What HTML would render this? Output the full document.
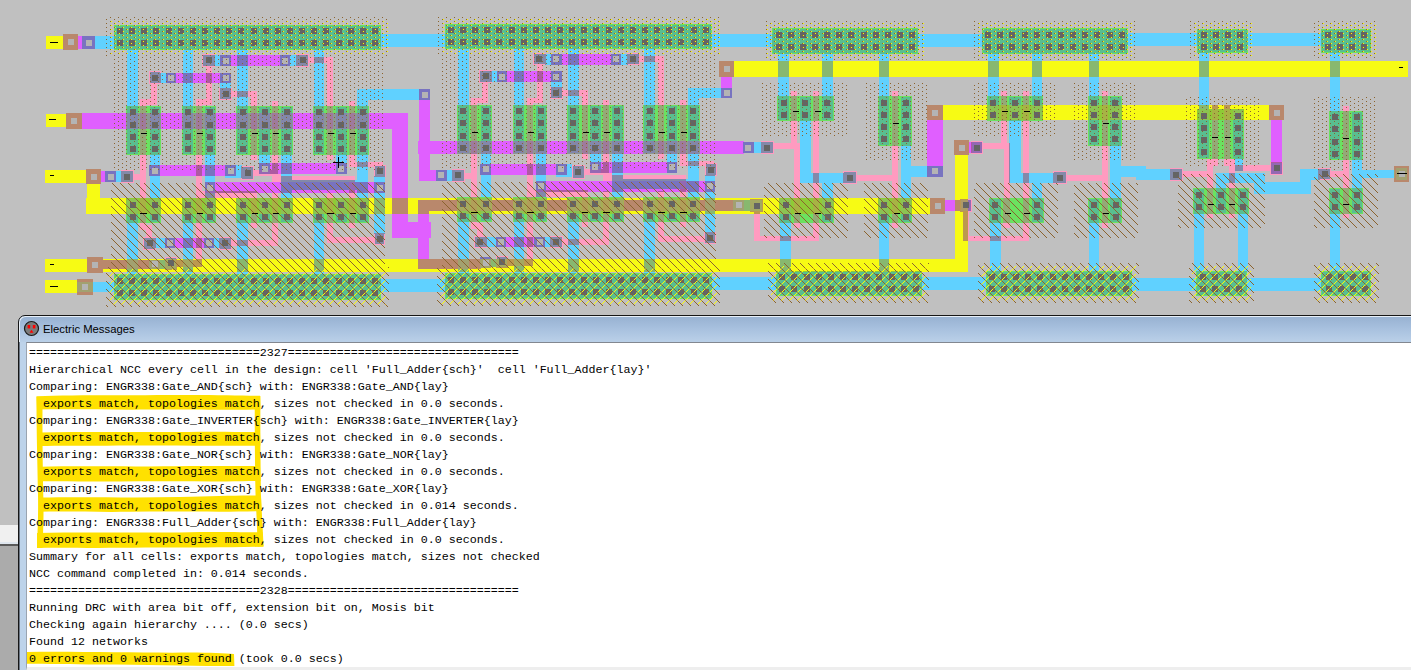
<!DOCTYPE html>
<html><head><meta charset="utf-8"><title>Electric</title>
<style>
html,body{margin:0;padding:0;}
body{width:1411px;height:670px;overflow:hidden;background:#c0c0c0;position:relative;font-family:"Liberation Sans",sans-serif;}
#lay{position:absolute;left:0;top:0;width:1411px;height:316px;overflow:hidden;}
#side1{position:absolute;left:0;top:525px;width:18px;height:17px;background:#f0f0f0;}
#side1b{position:absolute;left:0;top:542px;width:18px;height:2px;background:#dfe6ee;}
#side2{position:absolute;left:0;top:544px;width:18px;height:2px;background:#5a5a5a;}
#side3{position:absolute;left:0;top:546px;width:18px;height:124px;background:#ababab;}
#win{position:absolute;left:18px;top:315px;width:1400px;height:360px;border:1px solid #161616;border-radius:7px 0 0 0;box-sizing:border-box;
 background:#bdd3ea;box-shadow:inset 1px 1px 0 #e8f0f8;}
#tb{position:absolute;left:1px;top:1px;right:0;height:25px;border-radius:6px 0 0 0;background:linear-gradient(#98b2d2,#a7c0de 45%,#bad0e8);}
#ttl{position:absolute;left:43px;top:322px;font-size:11.3px;line-height:15px;color:#000;white-space:pre;}
#ico{position:absolute;left:23px;top:320px;}
#cont{position:absolute;left:26px;top:342px;width:1390px;height:329px;background:#fff;border-bottom:4px solid #eeeeee;border-top:1px solid #828790;border-left:1px solid #9aa4b0;box-sizing:border-box;}
#hl{position:absolute;left:0;top:0;}
#txt{position:absolute;left:29px;top:345px;margin:0;font-family:"Liberation Mono",monospace;font-size:11.667px;line-height:17px;color:#000;white-space:pre;}
</style></head><body>
<div id="lay">
<svg width="1411" height="316" viewBox="0 0 1411 316" shape-rendering="crispEdges" style="position:absolute;left:0;top:0">
<defs><pattern id="dB" width="8" height="4" patternUnits="userSpaceOnUse"><rect x="6" y="1" width="1" height="1" fill="#8b632e"/><rect x="2" y="3" width="1" height="1" fill="#8b632e"/></pattern><pattern id="dY" width="8" height="4" patternUnits="userSpaceOnUse"><rect x="7" y="1" width="1" height="1" fill="#ff0"/><rect x="3" y="3" width="1" height="1" fill="#ff0"/></pattern><pattern id="hB" width="8" height="8" patternUnits="userSpaceOnUse"><rect x="1" y="0" width="1" height="1" fill="#8b632e"/><rect x="2" y="1" width="1" height="1" fill="#8b632e"/><rect x="3" y="2" width="1" height="1" fill="#8b632e"/><rect x="4" y="3" width="1" height="1" fill="#8b632e"/><rect x="5" y="4" width="1" height="1" fill="#8b632e"/><rect x="6" y="5" width="1" height="1" fill="#8b632e"/><rect x="7" y="6" width="1" height="1" fill="#8b632e"/><rect x="0" y="7" width="1" height="1" fill="#8b632e"/></pattern><pattern id="hY" width="8" height="8" patternUnits="userSpaceOnUse"><rect x="1" y="0" width="1" height="1" fill="#c89a10"/><rect x="0" y="1" width="1" height="1" fill="#ff0"/><rect x="7" y="2" width="1" height="1" fill="#ff0"/><rect x="6" y="3" width="1" height="1" fill="#ff0"/><rect x="5" y="4" width="1" height="1" fill="#c89a10"/><rect x="4" y="5" width="1" height="1" fill="#ff0"/><rect x="3" y="6" width="1" height="1" fill="#ff0"/><rect x="2" y="7" width="1" height="1" fill="#ff0"/></pattern></defs>
<path fill="#59be90" d="M446 25h265v2h-265zM115 26h265v2h-265zM773 29h144v3h-144zM983 29h144v3h-144zM1322 30h48v2h-48zM1198 30h49v2h-49zM612 27h6v6h-6zM575 27h6v6h-6zM446 27h2v6h-2zM636 27h6v6h-6zM672 27h6v6h-6zM466 27h6v6h-6zM539 27h6v6h-6zM527 27h6v6h-6zM490 27h6v6h-6zM563 27h6v6h-6zM684 27h7v6h-7zM709 27h2v6h-2zM624 27h6v6h-6zM697 27h6v6h-6zM587 27h6v6h-6zM660 27h6v6h-6zM454 27h6v6h-6zM502 27h7v6h-7zM478 27h6v6h-6zM515 27h6v6h-6zM551 27h6v6h-6zM599 27h7v6h-7zM648 27h6v6h-6zM1125 32h2v1h-2zM1243 32h4v1h-4zM1322 32h3v1h-3zM1198 32h3v1h-3zM281 28h6v6h-6zM135 28h6v6h-6zM208 28h6v6h-6zM329 28h7v6h-7zM159 28h7v6h-7zM115 28h2v6h-2zM172 28h6v6h-6zM342 28h6v6h-6zM232 28h6v6h-6zM305 28h6v6h-6zM269 28h6v6h-6zM366 28h6v6h-6zM378 28h2v6h-2zM123 28h6v6h-6zM196 28h6v6h-6zM244 28h7v6h-7zM293 28h6v6h-6zM257 28h6v6h-6zM147 28h6v6h-6zM220 28h6v6h-6zM354 28h6v6h-6zM317 28h6v6h-6zM184 28h6v6h-6zM773 32h3v2h-3zM983 32h2v2h-2zM915 32h2v2h-2zM446 33h265v1h-265zM115 34h266v2h-266zM1052 32h6v6h-6zM1100 32h7v6h-7zM782 32h6v6h-6zM1003 32h6v6h-6zM842 32h6v6h-6zM879 32h6v6h-6zM818 32h6v6h-6zM1343 32h6v6h-6zM1219 32h6v6h-6zM1367 32h3v6h-3zM1015 32h7v6h-7zM1064 32h6v6h-6zM891 32h6v6h-6zM1076 32h6v6h-6zM1040 32h6v6h-6zM830 32h6v6h-6zM867 32h6v6h-6zM794 32h6v6h-6zM1355 32h6v6h-6zM1231 32h6v6h-6zM1113 32h6v6h-6zM806 32h6v6h-6zM903 32h6v6h-6zM854 32h7v6h-7zM991 32h6v6h-6zM1028 32h6v6h-6zM1088 32h6v6h-6zM1331 32h6v6h-6zM1207 32h6v6h-6zM1197 33h4v5h-4zM1321 33h4v5h-4zM1243 33h5v5h-5zM1125 33h3v5h-3zM915 34h3v4h-3zM772 34h4v4h-4zM982 34h3v4h-3zM445 34h267v5h-267zM114 36h267v4h-267zM982 38h146v6h-146zM1197 38h51v6h-51zM772 38h146v6h-146zM1321 38h49v6h-49zM612 39h6v6h-6zM575 39h6v6h-6zM709 39h3v6h-3zM636 39h6v6h-6zM672 39h6v6h-6zM466 39h6v6h-6zM539 39h6v6h-6zM527 39h6v6h-6zM490 39h6v6h-6zM563 39h6v6h-6zM684 39h7v6h-7zM624 39h6v6h-6zM697 39h6v6h-6zM587 39h6v6h-6zM445 39h3v6h-3zM660 39h6v6h-6zM454 39h6v6h-6zM502 39h7v6h-7zM478 39h6v6h-6zM515 39h6v6h-6zM551 39h6v6h-6zM599 39h7v6h-7zM648 39h6v6h-6zM281 40h6v6h-6zM135 40h6v6h-6zM208 40h6v6h-6zM329 40h7v6h-7zM159 40h7v6h-7zM378 40h3v6h-3zM172 40h6v6h-6zM342 40h6v6h-6zM232 40h6v6h-6zM305 40h6v6h-6zM269 40h6v6h-6zM366 40h6v6h-6zM114 40h3v6h-3zM123 40h6v6h-6zM196 40h6v6h-6zM244 40h7v6h-7zM293 40h6v6h-6zM257 40h6v6h-6zM147 40h6v6h-6zM220 40h6v6h-6zM354 40h6v6h-6zM317 40h6v6h-6zM184 40h6v6h-6zM1321 44h4v2h-4zM1125 44h3v2h-3zM1243 44h5v2h-5zM1197 44h4v2h-4zM772 44h4v3h-4zM915 44h3v3h-3zM982 44h3v3h-3zM445 45h267v2h-267zM114 46h267v1h-267zM446 47h265v1h-265zM114 47h266v2h-266zM568 48h11v1h-11zM644 48h11v1h-11zM514 48h10v1h-10zM458 48h11v1h-11zM1052 44h6v6h-6zM1100 44h7v6h-7zM782 44h6v6h-6zM1003 44h6v6h-6zM842 44h6v6h-6zM879 44h6v6h-6zM818 44h6v6h-6zM1343 44h6v6h-6zM1219 44h6v6h-6zM1367 44h3v6h-3zM1015 44h7v6h-7zM1064 44h6v6h-6zM891 44h6v6h-6zM1076 44h6v6h-6zM1040 44h6v6h-6zM830 44h6v6h-6zM867 44h6v6h-6zM794 44h6v6h-6zM1355 44h6v6h-6zM1231 44h6v6h-6zM1113 44h6v6h-6zM806 44h6v6h-6zM903 44h6v6h-6zM854 44h7v6h-7zM991 44h6v6h-6zM1028 44h6v6h-6zM1088 44h6v6h-6zM1331 44h6v6h-6zM1207 44h6v6h-6zM1125 46h2v4h-2zM1243 46h4v4h-4zM1322 46h3v4h-3zM1198 46h3v4h-3zM773 47h3v3h-3zM983 47h2v3h-2zM915 47h2v3h-2zM183 49h10v1h-10zM127 49h11v1h-11zM237 49h11v1h-11zM314 49h10v1h-10zM1322 50h48v2h-48zM1198 50h49v2h-49zM983 50h144v3h-144zM773 50h144v3h-144zM1199 52h10v1h-10zM1330 52h10v1h-10zM1089 53h10v1h-10zM778 53h11v1h-11zM822 53h11v1h-11zM988 53h11v1h-11zM1032 53h10v1h-10zM879 53h10v1h-10zM1089 96h10v4h-10zM778 96h11v4h-11zM822 96h11v4h-11zM988 96h11v4h-11zM1032 96h10v4h-10zM879 96h10v4h-10zM1110 97h11v3h-11zM1009 97h12v3h-12zM901 97h10v3h-10zM800 97h11v3h-11zM1110 100h2v5h-2zM1032 100h2v5h-2zM1097 100h2v5h-2zM988 100h2v5h-2zM1118 100h3v5h-3zM1089 100h2v5h-2zM1009 100h3v5h-3zM1018 100h3v5h-3zM996 100h3v5h-3zM1040 100h2v5h-2zM778 100h3v6h-3zM909 100h2v6h-2zM822 100h2v6h-2zM887 100h2v6h-2zM901 100h2v6h-2zM800 100h2v6h-2zM787 100h2v6h-2zM830 100h3v6h-3zM879 100h2v6h-2zM808 100h3v6h-3zM568 105h11v3h-11zM514 105h10v3h-10zM458 105h11v3h-11zM644 105h11v3h-11zM688 105h11v3h-11zM536 106h10v2h-10zM481 106h10v2h-10zM612 106h11v2h-11zM590 106h11v2h-11zM667 106h10v2h-10zM183 106h10v3h-10zM127 106h11v3h-11zM237 106h11v3h-11zM314 106h10v3h-10zM357 106h11v3h-11zM150 107h10v2h-10zM205 107h10v2h-10zM336 107h11v2h-11zM281 107h11v2h-11zM259 107h11v2h-11zM822 106h11v6h-11zM800 106h11v6h-11zM778 106h11v6h-11zM901 106h10v6h-10zM879 106h10v6h-10zM290 109h2v4h-2zM259 109h3v4h-3zM336 109h2v4h-2zM322 109h2v4h-2zM268 109h2v4h-2zM237 109h3v4h-3zM127 109h3v4h-3zM314 109h2v4h-2zM357 109h3v4h-3zM158 109h2v4h-2zM213 109h2v4h-2zM344 109h3v4h-3zM136 109h2v4h-2zM366 109h2v4h-2zM150 109h2v4h-2zM191 109h2v4h-2zM246 109h2v4h-2zM205 109h2v4h-2zM183 109h2v4h-2zM281 109h3v4h-3zM644 108h3v6h-3zM675 108h2v6h-2zM514 108h2v6h-2zM576 108h3v6h-3zM466 108h3v6h-3zM653 108h2v6h-2zM612 108h2v6h-2zM696 108h3v6h-3zM667 108h2v6h-2zM590 108h2v6h-2zM544 108h2v6h-2zM489 108h2v6h-2zM481 108h2v6h-2zM536 108h2v6h-2zM458 108h2v6h-2zM522 108h2v6h-2zM620 108h3v6h-3zM598 108h3v6h-3zM688 108h2v6h-2zM568 108h2v6h-2zM1330 111h10v3h-10zM1352 112h10v2h-10zM778 112h3v6h-3zM909 112h2v6h-2zM822 112h2v6h-2zM887 112h2v6h-2zM901 112h2v6h-2zM800 112h2v6h-2zM787 112h2v6h-2zM830 112h3v6h-3zM879 112h2v6h-2zM808 112h3v6h-3zM568 114h11v6h-11zM536 114h10v6h-10zM481 114h10v6h-10zM1360 114h2v6h-2zM644 114h11v6h-11zM612 114h11v6h-11zM514 114h10v6h-10zM1338 114h2v6h-2zM590 114h11v6h-11zM1352 114h2v6h-2zM1330 114h2v6h-2zM458 114h11v6h-11zM667 114h10v6h-10zM688 114h11v6h-11zM822 118h11v2h-11zM778 118h11v2h-11zM800 118h11v3h-11zM1009 120h12v1h-12zM901 118h10v6h-10zM879 118h10v6h-10zM1110 120h11v4h-11zM1089 120h10v4h-10zM1233 120h10v5h-10zM1199 120h10v5h-10zM644 120h3v6h-3zM1352 120h10v6h-10zM675 120h2v6h-2zM514 120h2v6h-2zM1330 120h10v6h-10zM576 120h3v6h-3zM466 120h3v6h-3zM653 120h2v6h-2zM612 120h2v6h-2zM696 120h3v6h-3zM667 120h2v6h-2zM590 120h2v6h-2zM544 120h2v6h-2zM489 120h2v6h-2zM481 120h2v6h-2zM536 120h2v6h-2zM458 120h2v6h-2zM522 120h2v6h-2zM620 120h3v6h-3zM598 120h3v6h-3zM688 120h2v6h-2zM568 120h2v6h-2zM1110 124h2v6h-2zM1097 124h2v6h-2zM909 124h2v6h-2zM887 124h2v6h-2zM1118 124h3v6h-3zM901 124h2v6h-2zM1089 124h2v6h-2zM879 124h2v6h-2zM1207 125h2v6h-2zM1199 125h2v6h-2zM1241 125h2v6h-2zM1233 125h2v6h-2zM1360 126h2v6h-2zM1338 126h2v6h-2zM1352 126h2v6h-2zM1330 126h2v6h-2zM568 126h11v7h-11zM536 126h10v7h-10zM481 126h10v7h-10zM644 126h11v7h-11zM612 126h11v7h-11zM514 126h10v7h-10zM590 126h11v7h-11zM458 126h11v7h-11zM667 126h10v7h-10zM688 126h11v7h-11zM150 129h10v5h-10zM205 129h10v5h-10zM336 129h11v5h-11zM183 129h10v5h-10zM281 129h11v5h-11zM259 129h11v5h-11zM237 129h11v5h-11zM127 129h11v5h-11zM314 129h10v5h-10zM357 129h11v5h-11zM1110 130h11v6h-11zM879 130h10v6h-10zM901 130h10v6h-10zM1089 130h10v6h-10zM1233 131h10v6h-10zM1199 131h10v6h-10zM1352 132h10v7h-10zM1330 132h10v7h-10zM644 133h3v6h-3zM675 133h2v6h-2zM514 133h2v6h-2zM576 133h3v6h-3zM466 133h3v6h-3zM653 133h2v6h-2zM612 133h2v6h-2zM696 133h3v6h-3zM667 133h2v6h-2zM590 133h2v6h-2zM544 133h2v6h-2zM489 133h2v6h-2zM481 133h2v6h-2zM536 133h2v6h-2zM458 133h2v6h-2zM522 133h2v6h-2zM620 133h3v6h-3zM598 133h3v6h-3zM688 133h2v6h-2zM568 133h2v6h-2zM290 134h2v6h-2zM259 134h3v6h-3zM336 134h2v6h-2zM322 134h2v6h-2zM268 134h2v6h-2zM237 134h3v6h-3zM127 134h3v6h-3zM314 134h2v6h-2zM357 134h3v6h-3zM158 134h2v6h-2zM213 134h2v6h-2zM344 134h3v6h-3zM136 134h2v6h-2zM366 134h2v6h-2zM150 134h2v6h-2zM191 134h2v6h-2zM246 134h2v6h-2zM205 134h2v6h-2zM183 134h2v6h-2zM281 134h3v6h-3zM568 139h11v2h-11zM481 139h10v2h-10zM536 139h10v2h-10zM644 139h11v2h-11zM612 139h11v2h-11zM514 139h10v2h-10zM590 139h11v2h-11zM458 139h11v2h-11zM667 139h10v2h-10zM688 139h11v2h-11zM1110 136h2v6h-2zM1097 136h2v6h-2zM909 136h2v6h-2zM887 136h2v6h-2zM1118 136h3v6h-3zM901 136h2v6h-2zM1089 136h2v6h-2zM879 136h2v6h-2zM1207 137h2v6h-2zM1199 137h2v6h-2zM1241 137h2v6h-2zM1233 137h2v6h-2zM1360 139h2v6h-2zM1338 139h2v6h-2zM1352 139h2v6h-2zM1330 139h2v6h-2zM1089 142h10v3h-10zM879 142h10v3h-10zM150 140h10v6h-10zM205 140h10v6h-10zM336 140h11v6h-11zM183 140h10v6h-10zM281 140h11v6h-11zM259 140h11v6h-11zM237 140h11v6h-11zM127 140h11v6h-11zM314 140h10v6h-10zM357 140h11v6h-11zM1110 142h11v4h-11zM901 142h10v4h-10zM1233 143h10v6h-10zM1199 143h10v6h-10zM1352 145h10v6h-10zM1330 145h10v6h-10zM290 146h2v6h-2zM259 146h3v6h-3zM336 146h2v6h-2zM322 146h2v6h-2zM268 146h2v6h-2zM237 146h3v6h-3zM127 146h3v6h-3zM314 146h2v6h-2zM357 146h3v6h-3zM158 146h2v6h-2zM213 146h2v6h-2zM344 146h3v6h-3zM136 146h2v6h-2zM366 146h2v6h-2zM150 146h2v6h-2zM191 146h2v6h-2zM246 146h2v6h-2zM205 146h2v6h-2zM183 146h2v6h-2zM281 146h3v6h-3zM237 152h11v2h-11zM127 152h11v2h-11zM183 152h10v2h-10zM314 152h10v2h-10zM1207 149h2v6h-2zM1199 149h2v6h-2zM1241 149h2v6h-2zM1233 149h2v6h-2zM205 152h10v3h-10zM259 152h11v3h-11zM336 152h11v3h-11zM281 152h11v3h-11zM150 152h10v3h-10zM357 152h11v3h-11zM1360 151h2v6h-2zM1338 151h2v6h-2zM1352 151h2v6h-2zM1330 151h2v6h-2zM1199 155h10v3h-10zM1233 155h10v3h-10zM1330 157h10v2h-10zM1235 158h8v1h-8zM1352 157h10v3h-10zM1352 188h10v4h-10zM1216 188h10v4h-10zM1194 189h10v3h-10zM1330 189h10v3h-10zM1238 189h10v3h-10zM1194 192h2v6h-2zM1330 192h2v6h-2zM1246 192h2v6h-2zM1238 192h2v6h-2zM1224 192h2v6h-2zM1338 192h2v6h-2zM1360 192h2v6h-2zM1216 192h2v6h-2zM1202 192h2v6h-2zM1352 192h2v6h-2zM1032 198h10v1h-10zM1110 198h11v4h-11zM1089 199h10v3h-10zM1032 199h11v3h-11zM990 199h11v3h-11zM1216 198h10v6h-10zM1352 198h10v6h-10zM1194 198h10v6h-10zM1330 198h10v6h-10zM1238 198h10v6h-10zM1032 202h2v6h-2zM1097 202h2v6h-2zM990 202h2v6h-2zM1119 202h2v6h-2zM1040 202h3v6h-3zM1110 202h3v6h-3zM1089 202h2v6h-2zM998 202h3v6h-3zM1194 204h2v6h-2zM1330 204h2v6h-2zM1246 204h2v6h-2zM1238 204h2v6h-2zM1224 204h2v6h-2zM1338 204h2v6h-2zM1216 204h2v6h-2zM1360 204h2v6h-2zM1202 204h2v6h-2zM1352 204h2v6h-2zM1216 210h10v3h-10zM1352 210h10v3h-10zM1089 208h10v6h-10zM1110 208h11v6h-11zM1032 208h11v6h-11zM990 208h11v6h-11zM1194 210h10v4h-10zM1330 210h10v4h-10zM1238 210h10v4h-10zM644 214h3v5h-3zM675 214h2v5h-2zM514 214h2v5h-2zM576 214h3v5h-3zM466 214h3v5h-3zM653 214h2v5h-2zM612 214h2v5h-2zM696 214h3v5h-3zM667 214h2v5h-2zM590 214h2v5h-2zM489 214h2v5h-2zM544 214h2v5h-2zM481 214h2v5h-2zM536 214h2v5h-2zM458 214h2v5h-2zM522 214h2v5h-2zM620 214h3v5h-3zM598 214h3v5h-3zM688 214h2v5h-2zM568 214h2v5h-2zM789 214h2v6h-2zM1032 214h2v6h-2zM1097 214h2v6h-2zM909 214h2v6h-2zM290 214h2v6h-2zM887 214h2v6h-2zM998 214h3v6h-3zM259 214h3v6h-3zM831 214h2v6h-2zM336 214h2v6h-2zM322 214h2v6h-2zM901 214h2v6h-2zM268 214h2v6h-2zM1040 214h3v6h-3zM237 214h3v6h-3zM1089 214h2v6h-2zM127 214h3v6h-3zM314 214h2v6h-2zM879 214h2v6h-2zM357 214h3v6h-3zM158 214h2v6h-2zM213 214h2v6h-2zM344 214h3v6h-3zM136 214h2v6h-2zM1110 214h3v6h-3zM780 214h3v6h-3zM366 214h2v6h-2zM150 214h2v6h-2zM191 214h2v6h-2zM246 214h2v6h-2zM990 214h2v6h-2zM205 214h2v6h-2zM822 214h3v6h-3zM1119 214h2v6h-2zM183 214h2v6h-2zM281 214h3v6h-3zM481 219h10v2h-10zM536 219h10v2h-10zM612 219h11v2h-11zM590 219h11v2h-11zM667 219h10v2h-10zM688 219h11v2h-11zM568 219h11v3h-11zM644 219h11v3h-11zM514 219h10v3h-10zM458 219h11v3h-11zM1110 220h11v2h-11zM1032 220h11v2h-11zM150 220h10v2h-10zM205 220h10v2h-10zM822 220h11v2h-11zM336 220h11v2h-11zM281 220h11v2h-11zM259 220h11v2h-11zM901 220h10v2h-10zM357 220h11v2h-11zM780 220h11v3h-11zM183 220h10v3h-10zM879 220h10v3h-10zM1089 220h10v3h-10zM237 220h11v3h-11zM127 220h11v3h-11zM314 220h10v3h-10zM990 220h11v3h-11zM1089 271h10v1h-10zM1238 271h9v1h-9zM990 271h11v1h-11zM1330 271h10v1h-10zM1196 271h8v1h-8zM1197 272h49v2h-49zM1322 272h48v2h-48zM987 272h144v2h-144zM777 272h144v2h-144zM568 273h11v1h-11zM514 273h10v1h-10zM458 273h11v1h-11zM644 273h11v1h-11zM183 274h10v1h-10zM127 274h11v1h-11zM237 274h11v1h-11zM314 274h10v1h-10zM446 274h265v3h-265zM919 274h2v3h-2zM777 274h2v3h-2zM1129 274h2v4h-2zM1322 274h4v4h-4zM1242 274h4v4h-4zM115 275h265v3h-265zM446 277h2v2h-2zM378 278h2v1h-2zM1332 274h6v6h-6zM846 274h6v6h-6zM797 274h7v6h-7zM1080 274h6v6h-6zM1218 274h6v6h-6zM987 274h2v6h-2zM1356 274h6v6h-6zM1368 274h2v6h-2zM1104 274h6v6h-6zM870 274h6v6h-6zM1007 274h6v6h-6zM907 274h6v6h-6zM810 274h6v6h-6zM1031 274h6v6h-6zM882 274h7v6h-7zM1197 274h3v6h-3zM995 274h6v6h-6zM834 274h6v6h-6zM1068 274h6v6h-6zM1116 274h7v6h-7zM1206 274h6v6h-6zM1344 274h6v6h-6zM858 274h6v6h-6zM1043 274h7v6h-7zM1092 274h6v6h-6zM1230 274h6v6h-6zM895 274h6v6h-6zM785 274h6v6h-6zM1019 274h6v6h-6zM1056 274h6v6h-6zM822 274h6v6h-6zM919 277h3v3h-3zM776 277h3v3h-3zM1242 278h5v2h-5zM1129 278h3v2h-3zM1321 278h5v2h-5zM115 278h2v4h-2zM612 277h6v6h-6zM575 277h6v6h-6zM709 277h3v6h-3zM636 277h6v6h-6zM672 277h6v6h-6zM466 277h6v6h-6zM539 277h6v6h-6zM527 277h6v6h-6zM490 277h6v6h-6zM563 277h6v6h-6zM684 277h7v6h-7zM624 277h6v6h-6zM697 277h6v6h-6zM587 277h6v6h-6zM660 277h6v6h-6zM454 277h6v6h-6zM502 277h7v6h-7zM478 277h6v6h-6zM515 277h6v6h-6zM551 277h6v6h-6zM599 277h7v6h-7zM648 277h6v6h-6zM445 279h3v4h-3zM232 278h6v6h-6zM269 278h6v6h-6zM147 278h6v6h-6zM354 278h6v6h-6zM208 278h6v6h-6zM123 278h6v6h-6zM184 278h6v6h-6zM281 278h6v6h-6zM159 278h7v6h-7zM305 278h6v6h-6zM366 278h6v6h-6zM220 278h6v6h-6zM135 278h6v6h-6zM329 278h7v6h-7zM172 278h6v6h-6zM342 278h6v6h-6zM196 278h6v6h-6zM244 278h7v6h-7zM293 278h6v6h-6zM257 278h6v6h-6zM317 278h6v6h-6zM378 279h3v5h-3zM114 282h3v2h-3zM776 280h146v6h-146zM1197 280h50v6h-50zM987 280h145v6h-145zM1321 280h49v6h-49zM445 283h267v6h-267zM114 284h267v6h-267zM919 286h3v4h-3zM776 286h3v4h-3zM709 289h3v1h-3zM1242 286h5v5h-5zM1129 286h3v5h-3zM1321 286h5v5h-5zM1332 286h6v6h-6zM846 286h6v6h-6zM797 286h7v6h-7zM1080 286h6v6h-6zM1218 286h6v6h-6zM987 286h2v6h-2zM1356 286h6v6h-6zM1368 286h2v6h-2zM1104 286h6v6h-6zM1007 286h6v6h-6zM870 286h6v6h-6zM907 286h6v6h-6zM810 286h6v6h-6zM1031 286h6v6h-6zM882 286h7v6h-7zM1197 286h3v6h-3zM995 286h6v6h-6zM834 286h6v6h-6zM1068 286h6v6h-6zM1116 286h7v6h-7zM1206 286h6v6h-6zM1344 286h6v6h-6zM858 286h6v6h-6zM1043 286h7v6h-7zM1092 286h6v6h-6zM1230 286h6v6h-6zM895 286h6v6h-6zM785 286h6v6h-6zM1019 286h6v6h-6zM1056 286h6v6h-6zM822 286h6v6h-6zM445 289h3v3h-3zM378 290h3v2h-3zM919 290h2v2h-2zM114 290h3v2h-3zM777 290h2v2h-2zM1129 291h2v1h-2zM1322 291h4v1h-4zM1242 291h4v1h-4zM612 289h6v6h-6zM575 289h6v6h-6zM636 289h6v6h-6zM672 289h6v6h-6zM466 289h6v6h-6zM539 289h6v6h-6zM527 289h6v6h-6zM490 289h6v6h-6zM563 289h6v6h-6zM684 289h7v6h-7zM624 289h6v6h-6zM697 289h6v6h-6zM587 289h6v6h-6zM660 289h6v6h-6zM454 289h6v6h-6zM502 289h7v6h-7zM478 289h6v6h-6zM515 289h6v6h-6zM551 289h6v6h-6zM599 289h7v6h-7zM648 289h6v6h-6zM709 290h2v5h-2zM1322 292h48v3h-48zM446 292h2v3h-2zM1197 292h49v3h-49zM987 292h144v3h-144zM777 292h144v3h-144zM232 290h6v6h-6zM269 290h6v6h-6zM147 290h6v6h-6zM354 290h6v6h-6zM208 290h6v6h-6zM123 290h6v6h-6zM184 290h6v6h-6zM281 290h6v6h-6zM159 290h7v6h-7zM305 290h6v6h-6zM366 290h6v6h-6zM220 290h6v6h-6zM135 290h6v6h-6zM329 290h7v6h-7zM172 290h6v6h-6zM342 290h6v6h-6zM196 290h6v6h-6zM244 290h7v6h-7zM293 290h6v6h-6zM257 290h6v6h-6zM317 290h6v6h-6zM115 292h2v4h-2zM378 292h2v4h-2zM446 295h265v3h-265zM115 296h265v3h-265z"/>
<path fill="#60d1ff" d="M1128 33h69v13h-69zM1248 33h73v13h-73zM381 34h64v13h-64zM712 34h60v13h-60zM918 34h64v13h-64zM95 36h19v13h-19zM568 49h11v5h-11zM237 50h11v5h-11zM644 49h11v7h-11zM314 50h10v7h-10zM1199 53h10v8h-10zM1330 53h10v8h-10zM778 54h11v7h-11zM822 54h11v7h-11zM1089 54h10v7h-10zM988 54h11v7h-11zM1032 54h10v7h-10zM879 54h10v7h-10zM621 54h6v11h-6zM546 54h5v11h-5zM290 55h6v11h-6zM215 55h5v11h-5zM514 49h10v22h-10zM183 50h10v23h-10zM492 71h5v11h-5zM161 73h5v10h-5zM551 82h11v5h-11zM220 83h11v5h-11zM568 65h11v25h-11zM237 66h11v25h-11zM1089 77h10v19h-10zM778 77h11v19h-11zM822 77h11v19h-11zM988 77h11v19h-11zM1032 77h10v19h-10zM879 77h10v19h-10zM688 88h33v10h-33zM357 89h62v11h-62zM458 49h11v56h-11zM644 62h11v43h-11zM1199 77h10v28h-10zM514 82h10v23h-10zM568 96h11v9h-11zM688 98h11v7h-11zM127 50h11v56h-11zM314 63h10v43h-10zM183 83h10v23h-10zM237 97h11v9h-11zM357 100h11v6h-11zM1330 77h10v34h-10zM1009 121h12v22h-12zM754 142h7v11h-7zM336 155h11v2h-11zM688 154h11v7h-11zM667 154h10v8h-10zM590 154h11v8h-11zM612 154h11v8h-11zM357 155h11v7h-11zM336 157h2v5h-2zM339 157h8v5h-8zM259 155h11v8h-11zM281 155h11v8h-11zM344 162h3v1h-3zM536 154h10v10h-10zM481 154h10v10h-10zM205 155h10v10h-10zM150 155h10v10h-10zM1235 159h8v6h-8zM1110 146h11v20h-11zM901 146h10v20h-10zM236 165h6v1h-6zM1110 166h36v3h-36zM1352 160h10v10h-10zM800 121h11v52h-11zM1010 143h11v30h-11zM567 164h5v11h-5zM612 173h11v2h-11zM236 166h5v10h-5zM281 174h11v2h-11zM901 166h26v11h-26zM1110 169h60v8h-60zM556 175h16v2h-16zM1352 170h42v8h-42zM225 176h16v2h-16zM688 166h11v13h-11zM357 167h11v13h-11zM1300 169h18v11h-18zM1136 177h34v3h-34zM447 170h5v11h-5zM536 175h10v6h-10zM705 176h10v5h-10zM686 179h13v2h-13zM116 171h5v11h-5zM1235 173h30v9h-30zM205 176h10v6h-10zM374 177h11v5h-11zM1300 180h11v2h-11zM355 180h13v2h-13zM1010 173h13v10h-13zM800 173h13v10h-13zM1216 173h13v10h-13zM819 173h24v10h-24zM1029 173h24v10h-24zM1235 182h76v1h-76zM1352 178h10v10h-10zM1216 183h10v5h-10zM1254 183h57v11h-57zM481 175h10v22h-10zM612 192h11v5h-11zM688 192h11v5h-11zM150 176h10v22h-10zM1110 177h11v21h-11zM901 177h10v21h-10zM822 183h11v15h-11zM1032 183h10v15h-10zM705 192h10v6h-10zM374 193h11v5h-11zM281 193h11v5h-11zM357 193h11v5h-11zM705 214h10v18h-10zM374 214h11v19h-11zM780 223h11v13h-11zM990 223h11v13h-11zM514 222h10v15h-10zM183 223h10v15h-10zM568 222h11v17h-11zM237 223h11v17h-11zM545 237h5v10h-5zM487 237h9v10h-9zM156 238h9v10h-9zM214 238h5v10h-5zM458 222h11v37h-11zM644 222h11v37h-11zM127 223h11v36h-11zM314 223h10v36h-10zM879 223h10v36h-10zM780 241h11v18h-11zM568 245h11v14h-11zM237 246h11v13h-11zM514 247h10v12h-10zM183 248h10v11h-10zM1330 214h10v57h-10zM1194 214h10v57h-10zM1238 214h10v57h-10zM1089 223h10v48h-10zM990 241h11v30h-11zM1194 271h2v1h-2zM1247 271h1v1h-1zM568 272h11v1h-11zM514 272h10v1h-10zM458 272h11v1h-11zM644 272h11v1h-11zM127 272h11v2h-11zM237 272h11v2h-11zM183 272h10v2h-10zM314 272h10v2h-10zM712 277h64v13h-64zM922 277h64v13h-64zM1132 278h64v13h-64zM1247 278h74v13h-74zM381 279h64v13h-64zM93 282h21v10h-21z"/>
<path fill="#646464" d="M557 27h6v6h-6zM460 27h6v6h-6zM630 27h6v6h-6zM654 27h6v6h-6zM484 27h6v6h-6zM691 27h6v6h-6zM448 27h6v6h-6zM521 27h6v6h-6zM581 27h6v6h-6zM678 27h6v6h-6zM545 27h6v6h-6zM618 27h6v6h-6zM533 27h6v6h-6zM569 27h6v6h-6zM472 27h6v6h-6zM642 27h6v6h-6zM509 27h6v6h-6zM496 27h6v6h-6zM666 27h6v6h-6zM703 27h6v6h-6zM606 27h6v6h-6zM593 27h6v6h-6zM336 28h6v6h-6zM226 28h6v6h-6zM323 28h6v6h-6zM360 28h6v6h-6zM190 28h6v6h-6zM263 28h6v6h-6zM153 28h6v6h-6zM214 28h6v6h-6zM117 28h6v6h-6zM287 28h6v6h-6zM141 28h6v6h-6zM311 28h6v6h-6zM348 28h6v6h-6zM178 28h6v6h-6zM251 28h6v6h-6zM238 28h6v6h-6zM202 28h6v6h-6zM275 28h6v6h-6zM299 28h6v6h-6zM129 28h6v6h-6zM372 28h6v6h-6zM166 28h6v6h-6zM997 32h6v6h-6zM1213 32h6v6h-6zM1034 32h6v6h-6zM800 32h6v6h-6zM873 32h6v6h-6zM1107 32h6v6h-6zM1237 32h6v6h-6zM1094 32h6v6h-6zM861 32h6v6h-6zM824 32h6v6h-6zM897 32h6v6h-6zM1058 32h6v6h-6zM1325 32h6v6h-6zM1022 32h6v6h-6zM1337 32h6v6h-6zM1361 32h6v6h-6zM1201 32h6v6h-6zM985 32h6v6h-6zM788 32h6v6h-6zM1119 32h6v6h-6zM1225 32h6v6h-6zM848 32h6v6h-6zM1009 32h6v6h-6zM1082 32h6v6h-6zM812 32h6v6h-6zM885 32h6v6h-6zM1046 32h6v6h-6zM1349 32h6v6h-6zM836 32h6v6h-6zM909 32h6v6h-6zM776 32h6v6h-6zM1070 32h6v6h-6zM557 39h6v6h-6zM460 39h6v6h-6zM630 39h6v6h-6zM654 39h6v6h-6zM484 39h6v6h-6zM691 39h6v6h-6zM448 39h6v6h-6zM521 39h6v6h-6zM581 39h6v6h-6zM678 39h6v6h-6zM545 39h6v6h-6zM618 39h6v6h-6zM533 39h6v6h-6zM569 39h6v6h-6zM472 39h6v6h-6zM642 39h6v6h-6zM509 39h6v6h-6zM496 39h6v6h-6zM666 39h6v6h-6zM703 39h6v6h-6zM606 39h6v6h-6zM593 39h6v6h-6zM336 40h6v6h-6zM226 40h6v6h-6zM323 40h6v6h-6zM360 40h6v6h-6zM190 40h6v6h-6zM263 40h6v6h-6zM153 40h6v6h-6zM214 40h6v6h-6zM117 40h6v6h-6zM287 40h6v6h-6zM141 40h6v6h-6zM311 40h6v6h-6zM348 40h6v6h-6zM178 40h6v6h-6zM251 40h6v6h-6zM238 40h6v6h-6zM202 40h6v6h-6zM275 40h6v6h-6zM299 40h6v6h-6zM129 40h6v6h-6zM372 40h6v6h-6zM166 40h6v6h-6zM997 44h6v6h-6zM1213 44h6v6h-6zM1034 44h6v6h-6zM800 44h6v6h-6zM873 44h6v6h-6zM1107 44h6v6h-6zM1237 44h6v6h-6zM1094 44h6v6h-6zM861 44h6v6h-6zM824 44h6v6h-6zM897 44h6v6h-6zM1058 44h6v6h-6zM1325 44h6v6h-6zM1022 44h6v6h-6zM1337 44h6v6h-6zM1361 44h6v6h-6zM1201 44h6v6h-6zM985 44h6v6h-6zM788 44h6v6h-6zM1119 44h6v6h-6zM1225 44h6v6h-6zM848 44h6v6h-6zM1009 44h6v6h-6zM1082 44h6v6h-6zM812 44h6v6h-6zM885 44h6v6h-6zM1046 44h6v6h-6zM1349 44h6v6h-6zM836 44h6v6h-6zM909 44h6v6h-6zM776 44h6v6h-6zM1070 44h6v6h-6zM630 56h6v6h-6zM536 56h6v6h-6zM206 57h6v6h-6zM300 57h6v6h-6zM483 73h6v6h-6zM152 75h6v6h-6zM553 90h6v6h-6zM223 91h6v6h-6zM781 100h6v6h-6zM990 100h6v6h-6zM824 100h6v6h-6zM881 100h6v6h-6zM1034 100h6v6h-6zM802 100h6v6h-6zM903 100h6v6h-6zM1112 100h6v6h-6zM1012 100h6v6h-6zM1091 100h6v6h-6zM570 108h6v6h-6zM647 108h6v6h-6zM690 108h6v6h-6zM538 108h6v6h-6zM483 108h6v6h-6zM460 108h6v6h-6zM592 108h6v6h-6zM614 108h6v6h-6zM669 108h6v6h-6zM516 108h6v6h-6zM185 109h6v6h-6zM360 109h6v6h-6zM130 109h6v6h-6zM338 109h6v6h-6zM316 109h6v6h-6zM284 109h6v6h-6zM207 109h6v6h-6zM152 109h6v6h-6zM262 109h6v6h-6zM240 109h6v6h-6zM781 112h6v6h-6zM1034 112h6v6h-6zM1012 112h6v6h-6zM824 112h6v6h-6zM903 112h6v6h-6zM1091 112h6v6h-6zM990 112h6v6h-6zM802 112h6v6h-6zM881 112h6v6h-6zM1112 112h6v6h-6zM1201 113h6v6h-6zM1235 113h6v6h-6zM1332 114h6v6h-6zM1354 114h6v6h-6zM570 120h6v6h-6zM647 120h6v6h-6zM690 120h6v6h-6zM538 120h6v6h-6zM483 120h6v6h-6zM460 120h6v6h-6zM592 120h6v6h-6zM614 120h6v6h-6zM669 120h6v6h-6zM516 120h6v6h-6zM185 122h6v6h-6zM360 122h6v6h-6zM130 122h6v6h-6zM338 122h6v6h-6zM316 122h6v6h-6zM284 122h6v6h-6zM207 122h6v6h-6zM152 122h6v6h-6zM262 122h6v6h-6zM240 122h6v6h-6zM903 124h6v6h-6zM1091 124h6v6h-6zM881 124h6v6h-6zM1112 124h6v6h-6zM1201 125h6v6h-6zM1235 125h6v6h-6zM1332 126h6v6h-6zM1354 126h6v6h-6zM570 133h6v6h-6zM647 133h6v6h-6zM690 133h6v6h-6zM538 133h6v6h-6zM483 133h6v6h-6zM460 133h6v6h-6zM592 133h6v6h-6zM614 133h6v6h-6zM669 133h6v6h-6zM516 133h6v6h-6zM185 134h6v6h-6zM360 134h6v6h-6zM130 134h6v6h-6zM338 134h6v6h-6zM316 134h6v6h-6zM284 134h6v6h-6zM207 134h6v6h-6zM152 134h6v6h-6zM262 134h6v6h-6zM240 134h6v6h-6zM903 136h6v6h-6zM1091 136h6v6h-6zM881 136h6v6h-6zM1112 136h6v6h-6zM1201 137h6v6h-6zM1235 137h6v6h-6zM1332 139h6v6h-6zM1354 139h6v6h-6zM570 145h6v6h-6zM647 145h6v6h-6zM690 145h6v6h-6zM538 145h6v6h-6zM483 145h6v6h-6zM460 145h6v6h-6zM592 145h6v6h-6zM614 145h6v6h-6zM764 145h6v6h-6zM974 145h6v6h-6zM669 145h6v6h-6zM516 145h6v6h-6zM185 146h6v6h-6zM360 146h6v6h-6zM130 146h6v6h-6zM338 146h6v6h-6zM316 146h6v6h-6zM284 146h6v6h-6zM207 146h6v6h-6zM152 146h6v6h-6zM262 146h6v6h-6zM240 146h6v6h-6zM1201 149h6v6h-6zM1235 149h6v6h-6zM1332 151h6v6h-6zM1354 151h6v6h-6zM1274 165h6v6h-6zM708 167h6v6h-6zM377 168h6v6h-6zM575 169h6v6h-6zM245 170h6v6h-6zM1322 171h6v6h-6zM1173 172h6v6h-6zM455 172h6v6h-6zM124 174h6v6h-6zM1057 175h6v6h-6zM847 175h6v6h-6zM1332 192h6v6h-6zM1354 192h6v6h-6zM1196 192h6v6h-6zM1218 192h6v6h-6zM1240 192h6v6h-6zM570 201h6v6h-6zM647 201h6v6h-6zM690 201h6v6h-6zM538 201h6v6h-6zM483 201h6v6h-6zM460 201h6v6h-6zM592 201h6v6h-6zM614 201h6v6h-6zM669 201h6v6h-6zM516 201h6v6h-6zM185 202h6v6h-6zM1034 202h6v6h-6zM360 202h6v6h-6zM130 202h6v6h-6zM1113 202h6v6h-6zM783 202h6v6h-6zM903 202h6v6h-6zM825 202h6v6h-6zM1091 202h6v6h-6zM338 202h6v6h-6zM316 202h6v6h-6zM963 202h6v6h-6zM284 202h6v6h-6zM207 202h6v6h-6zM881 202h6v6h-6zM152 202h6v6h-6zM992 202h6v6h-6zM262 202h6v6h-6zM240 202h6v6h-6zM754 203h6v6h-6zM1332 204h6v6h-6zM1218 204h6v6h-6zM1196 204h6v6h-6zM1240 204h6v6h-6zM1354 204h6v6h-6zM570 213h6v6h-6zM647 213h6v6h-6zM690 213h6v6h-6zM538 213h6v6h-6zM483 213h6v6h-6zM460 213h6v6h-6zM592 213h6v6h-6zM614 213h6v6h-6zM669 213h6v6h-6zM516 213h6v6h-6zM185 214h6v6h-6zM1034 214h6v6h-6zM360 214h6v6h-6zM130 214h6v6h-6zM1113 214h6v6h-6zM783 214h6v6h-6zM903 214h6v6h-6zM825 214h6v6h-6zM1091 214h6v6h-6zM338 214h6v6h-6zM316 214h6v6h-6zM284 214h6v6h-6zM207 214h6v6h-6zM881 214h6v6h-6zM152 214h6v6h-6zM992 214h6v6h-6zM262 214h6v6h-6zM240 214h6v6h-6zM707 235h6v6h-6zM377 236h6v6h-6zM477 239h6v6h-6zM553 239h6v6h-6zM147 240h6v6h-6zM222 240h6v6h-6zM499 259h6v6h-6zM168 260h6v6h-6zM1062 274h6v6h-6zM901 274h6v6h-6zM1025 274h6v6h-6zM791 274h6v6h-6zM864 274h6v6h-6zM1098 274h6v6h-6zM1236 274h6v6h-6zM828 274h6v6h-6zM1200 274h6v6h-6zM1338 274h6v6h-6zM989 274h6v6h-6zM1086 274h6v6h-6zM1050 274h6v6h-6zM889 274h6v6h-6zM816 274h6v6h-6zM1013 274h6v6h-6zM779 274h6v6h-6zM852 274h6v6h-6zM1123 274h6v6h-6zM1224 274h6v6h-6zM1362 274h6v6h-6zM1074 274h6v6h-6zM913 274h6v6h-6zM1326 274h6v6h-6zM1037 274h6v6h-6zM876 274h6v6h-6zM1110 274h6v6h-6zM1212 274h6v6h-6zM804 274h6v6h-6zM1350 274h6v6h-6zM840 274h6v6h-6zM1001 274h6v6h-6zM557 277h6v6h-6zM460 277h6v6h-6zM630 277h6v6h-6zM654 277h6v6h-6zM484 277h6v6h-6zM691 277h6v6h-6zM448 277h6v6h-6zM521 277h6v6h-6zM581 277h6v6h-6zM678 277h6v6h-6zM545 277h6v6h-6zM618 277h6v6h-6zM533 277h6v6h-6zM569 277h6v6h-6zM472 277h6v6h-6zM642 277h6v6h-6zM509 277h6v6h-6zM496 277h6v6h-6zM666 277h6v6h-6zM703 277h6v6h-6zM606 277h6v6h-6zM593 277h6v6h-6zM336 278h6v6h-6zM226 278h6v6h-6zM323 278h6v6h-6zM360 278h6v6h-6zM190 278h6v6h-6zM263 278h6v6h-6zM153 278h6v6h-6zM214 278h6v6h-6zM117 278h6v6h-6zM287 278h6v6h-6zM141 278h6v6h-6zM311 278h6v6h-6zM348 278h6v6h-6zM178 278h6v6h-6zM251 278h6v6h-6zM238 278h6v6h-6zM202 278h6v6h-6zM275 278h6v6h-6zM299 278h6v6h-6zM129 278h6v6h-6zM372 278h6v6h-6zM166 278h6v6h-6zM1062 286h6v6h-6zM901 286h6v6h-6zM1025 286h6v6h-6zM791 286h6v6h-6zM864 286h6v6h-6zM1098 286h6v6h-6zM1236 286h6v6h-6zM828 286h6v6h-6zM1200 286h6v6h-6zM1338 286h6v6h-6zM989 286h6v6h-6zM1086 286h6v6h-6zM1050 286h6v6h-6zM889 286h6v6h-6zM816 286h6v6h-6zM1013 286h6v6h-6zM779 286h6v6h-6zM852 286h6v6h-6zM1123 286h6v6h-6zM1224 286h6v6h-6zM1362 286h6v6h-6zM1074 286h6v6h-6zM913 286h6v6h-6zM1326 286h6v6h-6zM1037 286h6v6h-6zM876 286h6v6h-6zM1110 286h6v6h-6zM1212 286h6v6h-6zM804 286h6v6h-6zM1350 286h6v6h-6zM840 286h6v6h-6zM1001 286h6v6h-6zM557 289h6v6h-6zM460 289h6v6h-6zM630 289h6v6h-6zM654 289h6v6h-6zM484 289h6v6h-6zM691 289h6v6h-6zM448 289h6v6h-6zM521 289h6v6h-6zM581 289h6v6h-6zM678 289h6v6h-6zM545 289h6v6h-6zM618 289h6v6h-6zM533 289h6v6h-6zM569 289h6v6h-6zM472 289h6v6h-6zM642 289h6v6h-6zM509 289h6v6h-6zM496 289h6v6h-6zM666 289h6v6h-6zM703 289h6v6h-6zM606 289h6v6h-6zM593 289h6v6h-6zM336 290h6v6h-6zM226 290h6v6h-6zM323 290h6v6h-6zM360 290h6v6h-6zM190 290h6v6h-6zM263 290h6v6h-6zM153 290h6v6h-6zM214 290h6v6h-6zM117 290h6v6h-6zM287 290h6v6h-6zM141 290h6v6h-6zM311 290h6v6h-6zM348 290h6v6h-6zM178 290h6v6h-6zM251 290h6v6h-6zM238 290h6v6h-6zM202 290h6v6h-6zM275 290h6v6h-6zM299 290h6v6h-6zM129 290h6v6h-6zM372 290h6v6h-6zM166 290h6v6h-6z"/>
<path fill="#6be260" d="M445 24h267v1h-267zM114 25h267v1h-267zM982 28h146v1h-146zM772 28h146v1h-146zM1197 29h51v1h-51zM1321 29h50v1h-50zM1127 29h1v4h-1zM1247 30h1v3h-1zM1197 30h1v3h-1zM1321 30h1v3h-1zM445 25h1v9h-1zM711 25h1v9h-1zM380 26h1v8h-1zM982 29h1v5h-1zM772 29h1v5h-1zM917 29h1v5h-1zM114 26h1v10h-1zM711 47h1v1h-1zM445 47h1v1h-1zM380 47h1v2h-1zM579 48h65v1h-65zM469 48h45v1h-45zM524 48h44v1h-44zM445 48h13v1h-13zM655 48h57v1h-57zM114 49h13v1h-13zM138 49h45v1h-45zM324 49h57v1h-57zM248 49h66v1h-66zM193 49h44v1h-44zM1370 30h1v22h-1zM1247 46h1v6h-1zM1197 46h1v6h-1zM1321 46h1v6h-1zM1127 46h1v7h-1zM982 47h1v6h-1zM772 47h1v6h-1zM917 47h1v6h-1zM1209 52h39v1h-39zM1197 52h2v1h-2zM1321 52h9v1h-9zM1340 52h31v1h-31zM772 53h6v1h-6zM999 53h33v1h-33zM789 53h33v1h-33zM1099 53h29v1h-29zM1042 53h47v1h-47zM982 53h6v1h-6zM889 53h29v1h-29zM833 53h46v1h-46zM1108 96h14v1h-14zM898 96h14v1h-14zM797 96h16v1h-16zM1007 96h16v1h-16zM1029 96h3v9h-3zM1088 96h1v9h-1zM1099 96h3v9h-3zM1042 96h1v9h-1zM999 96h2v9h-2zM987 96h1v9h-1zM1108 97h2v8h-2zM1021 97h2v8h-2zM1007 97h2v8h-2zM1121 97h1v8h-1zM664 105h16v1h-16zM533 105h14v1h-14zM609 105h15v1h-15zM477 105h15v1h-15zM588 105h15v1h-15zM202 106h14v1h-14zM333 106h16v1h-16zM278 106h15v1h-15zM257 106h15v1h-15zM146 106h15v1h-15zM819 96h3v15h-3zM797 97h3v14h-3zM1349 111h14v1h-14zM821 111h1v1h-1zM799 111h1v1h-1zM182 106h1v7h-1zM138 106h2v7h-2zM324 106h3v7h-3zM355 106h2v7h-2zM313 106h1v7h-1zM368 106h1v7h-1zM193 106h3v7h-3zM126 106h1v7h-1zM248 106h3v7h-3zM236 106h1v7h-1zM257 107h2v6h-2zM292 107h1v6h-1zM278 107h3v6h-3zM215 107h1v6h-1zM160 107h1v6h-1zM146 107h4v6h-4zM333 107h3v6h-3zM202 107h3v6h-3zM347 107h2v6h-2zM270 107h2v6h-2zM789 96h2v24h-2zM777 96h1v24h-1zM833 96h1v24h-1zM819 112h3v8h-3zM811 97h2v24h-2zM797 112h3v9h-3zM987 120h14v1h-14zM1029 120h14v1h-14zM819 120h15v1h-15zM777 120h14v1h-14zM1021 120h2v1h-2zM1007 120h2v1h-2zM898 97h3v26h-3zM1108 120h2v3h-2zM899 123h2v1h-2zM1109 123h1v1h-1zM686 105h2v27h-2zM588 106h2v26h-2zM477 106h4v26h-4zM664 106h3v26h-3zM609 106h3v26h-3zM533 106h3v26h-3zM257 129h2v4h-2zM278 129h3v4h-3zM146 129h4v4h-4zM333 129h3v4h-3zM355 129h2v4h-2zM202 129h3v4h-3zM687 132h1v1h-1zM610 132h2v1h-2zM534 132h2v1h-2zM589 132h1v1h-1zM478 132h3v1h-3zM665 132h2v1h-2zM203 133h2v1h-2zM258 133h1v1h-1zM147 133h3v1h-3zM356 133h1v1h-1zM334 133h2v1h-2zM279 133h2v1h-2zM1230 120h3v17h-3zM1231 137h2v1h-2zM469 105h2v36h-2zM513 105h1v36h-1zM655 105h3v36h-3zM643 105h1v36h-1zM699 105h1v36h-1zM579 105h3v36h-3zM524 105h3v36h-3zM567 105h1v36h-1zM457 105h1v36h-1zM623 106h1v35h-1zM601 106h2v35h-2zM546 106h1v35h-1zM491 106h1v35h-1zM677 106h3v35h-3zM588 133h2v8h-2zM477 133h4v8h-4zM664 133h3v8h-3zM609 133h3v8h-3zM686 133h2v8h-2zM533 133h3v8h-3zM889 96h3v49h-3zM878 96h1v49h-1zM1099 120h3v25h-3zM1088 120h1v25h-1zM911 97h1v49h-1zM1121 120h1v26h-1zM898 124h3v22h-3zM1108 124h2v22h-2zM1088 145h14v1h-14zM878 145h14v1h-14zM182 129h1v25h-1zM138 129h2v25h-2zM324 129h3v25h-3zM313 129h1v25h-1zM193 129h3v25h-3zM126 129h1v25h-1zM248 129h3v25h-3zM236 129h1v25h-1zM292 129h1v26h-1zM215 129h1v26h-1zM160 129h1v26h-1zM368 129h1v26h-1zM347 129h2v26h-2zM270 129h2v26h-2zM257 134h2v21h-2zM278 134h3v21h-3zM146 134h4v21h-4zM333 134h3v21h-3zM355 134h2v21h-2zM202 134h3v21h-3zM236 154h15v1h-15zM313 154h14v1h-14zM126 154h14v1h-14zM182 154h14v1h-14zM1209 120h3v38h-3zM1197 120h2v38h-2zM1230 138h3v20h-3zM1340 111h3v48h-3zM1329 111h1v48h-1zM1218 120h6v39h-6zM1243 120h1v39h-1zM1230 158h5v1h-5zM1197 158h15v1h-15zM1362 112h1v48h-1zM1349 112h3v48h-3zM1329 159h14v1h-14zM1193 188h14v1h-14zM1329 188h14v1h-14zM1235 188h14v1h-14zM513 197h14v1h-14zM664 197h16v1h-16zM533 197h14v1h-14zM567 197h15v1h-15zM609 197h15v1h-15zM686 197h14v1h-14zM477 197h15v1h-15zM457 197h14v1h-14zM588 197h15v1h-15zM643 197h15v1h-15zM1042 198h2v1h-2zM1088 198h14v1h-14zM989 198h14v1h-14zM1213 188h3v16h-3zM1214 204h2v1h-2zM1349 188h3v25h-3zM1226 188h3v25h-3zM1362 188h1v25h-1zM1108 198h2v15h-2zM1010 198h13v15h-13zM1029 198h3v15h-3zM1213 205h3v8h-3zM1235 189h3v25h-3zM1340 189h3v25h-3zM1248 189h1v25h-1zM1193 189h1v25h-1zM1329 189h1v25h-1zM1204 189h3v25h-3zM1213 213h16v1h-16zM1109 213h1v1h-1zM1030 213h2v1h-2zM1349 213h14v1h-14zM1011 213h12v1h-12zM623 214h1v7h-1zM601 214h2v7h-2zM588 214h2v7h-2zM477 214h4v7h-4zM546 214h1v7h-1zM491 214h1v7h-1zM677 214h3v7h-3zM664 214h3v7h-3zM609 214h3v7h-3zM686 214h2v7h-2zM699 214h1v7h-1zM533 214h3v7h-3zM1121 198h1v24h-1zM1043 199h1v23h-1zM257 214h2v8h-2zM292 214h1v8h-1zM911 214h1v8h-1zM278 214h3v8h-3zM469 214h2v8h-2zM215 214h1v8h-1zM513 214h1v8h-1zM819 214h3v8h-3zM160 214h1v8h-1zM146 214h4v8h-4zM333 214h3v8h-3zM655 214h3v8h-3zM898 214h3v8h-3zM355 214h2v8h-2zM643 214h1v8h-1zM1108 214h2v8h-2zM368 214h1v8h-1zM202 214h3v8h-3zM347 214h2v8h-2zM579 214h3v8h-3zM1029 214h3v8h-3zM524 214h3v8h-3zM270 214h2v8h-2zM567 214h1v8h-1zM833 214h1v8h-1zM457 214h1v8h-1zM664 221h16v1h-16zM533 221h14v1h-14zM609 221h15v1h-15zM686 221h14v1h-14zM477 221h15v1h-15zM588 221h15v1h-15zM989 199h1v24h-1zM1099 199h3v24h-3zM1001 199h2v24h-2zM1088 199h1v24h-1zM791 214h3v9h-3zM182 214h1v9h-1zM779 214h1v9h-1zM138 214h2v9h-2zM324 214h3v9h-3zM889 214h3v9h-3zM1010 214h13v9h-13zM313 214h1v9h-1zM193 214h3v9h-3zM878 214h1v9h-1zM126 214h1v9h-1zM248 214h3v9h-3zM800 214h13v9h-13zM236 214h1v9h-1zM202 222h14v1h-14zM333 222h16v1h-16zM278 222h15v1h-15zM819 222h15v1h-15zM1108 222h14v1h-14zM355 222h14v1h-14zM257 222h15v1h-15zM146 222h15v1h-15zM898 222h14v1h-14zM1029 222h15v1h-15zM1099 271h33v1h-33zM986 271h4v1h-4zM1001 271h88v1h-88zM1204 271h34v1h-34zM1321 271h9v1h-9zM1340 271h31v1h-31zM579 273h65v1h-65zM469 273h45v1h-45zM524 273h44v1h-44zM445 273h13v1h-13zM655 273h57v1h-57zM114 274h13v1h-13zM138 274h45v1h-45zM324 274h57v1h-57zM248 274h66v1h-66zM193 274h44v1h-44zM776 272h1v5h-1zM921 272h1v5h-1zM711 274h1v3h-1zM1131 272h1v6h-1zM1246 272h1v6h-1zM1321 272h1v6h-1zM445 274h1v5h-1zM380 275h1v4h-1zM114 275h1v7h-1zM986 272h1v23h-1zM1370 272h1v23h-1zM1196 272h1v23h-1zM776 290h1v5h-1zM921 290h1v5h-1zM1131 291h1v4h-1zM1246 291h1v4h-1zM1321 291h1v4h-1zM986 295h146v1h-146zM776 295h146v1h-146zM1196 295h51v1h-51zM1321 295h50v1h-50zM711 290h1v8h-1zM445 292h1v6h-1zM114 292h1v7h-1zM380 292h1v7h-1zM445 298h267v1h-267zM114 299h267v1h-267z"/>
<path fill="#7873c0" d="M82 36h13v4h-13zM82 40h4v6h-4zM92 40h3v6h-3zM82 46h13v3h-13zM611 54h10v2h-10zM551 54h11v2h-11zM280 55h10v3h-10zM220 55h11v3h-11zM551 56h2v6h-2zM559 56h3v6h-3zM619 56h2v6h-2zM611 56h2v6h-2zM229 58h2v6h-2zM280 58h2v6h-2zM220 58h3v6h-3zM288 58h2v6h-2zM568 54h11v11h-11zM551 62h11v3h-11zM611 62h10v3h-10zM237 55h11v11h-11zM280 64h10v2h-10zM220 64h11v2h-11zM497 71h10v3h-10zM551 71h11v3h-11zM220 73h11v2h-11zM166 73h10v2h-10zM551 74h2v6h-2zM559 74h3v6h-3zM505 74h2v6h-2zM497 74h2v6h-2zM166 75h2v6h-2zM229 75h2v6h-2zM174 75h2v6h-2zM220 75h3v6h-3zM514 71h10v11h-10zM551 80h11v2h-11zM497 80h10v2h-10zM183 73h10v10h-10zM220 81h11v2h-11zM166 81h10v2h-10zM721 88h11v2h-11zM419 89h11v3h-11zM721 90h3v6h-3zM730 90h2v6h-2zM419 92h3v6h-3zM428 92h2v6h-2zM721 96h11v2h-11zM419 98h11v2h-11zM743 142h11v3h-11zM743 145h2v6h-2zM751 145h3v6h-3zM743 151h11v2h-11zM667 162h10v2h-10zM590 162h11v2h-11zM259 163h11v3h-11zM339 163h8v3h-8zM480 164h11v2h-11zM556 164h11v2h-11zM149 165h11v3h-11zM225 165h11v3h-11zM927 166h16v2h-16zM590 164h2v5h-2zM598 164h3v5h-3zM675 164h2v6h-2zM667 164h2v6h-2zM259 166h3v4h-3zM268 166h2v4h-2zM336 163h2v9h-2zM556 166h2v6h-2zM480 166h3v6h-3zM344 166h3v6h-3zM489 166h2v6h-2zM564 166h3v6h-3zM436 170h11v2h-11zM612 162h11v11h-11zM667 170h10v3h-10zM281 163h11v11h-11zM927 168h5v6h-5zM234 168h2v6h-2zM149 168h3v6h-3zM938 168h5v6h-5zM158 168h2v6h-2zM225 168h3v6h-3zM105 171h11v3h-11zM336 172h11v2h-11zM536 164h10v11h-10zM480 172h11v3h-11zM556 172h11v3h-11zM205 165h10v11h-10zM149 174h11v2h-11zM225 174h11v2h-11zM927 174h16v3h-16zM436 172h2v6h-2zM444 172h3v6h-3zM114 174h2v6h-2zM105 174h3v6h-3zM436 178h11v3h-11zM105 180h11v2h-11zM705 181h10v2h-10zM536 181h10v2h-10zM205 182h10v3h-10zM374 182h11v3h-11zM612 181h68v8h-68zM686 181h13v8h-13zM705 183h2v6h-2zM536 183h2v6h-2zM544 183h2v6h-2zM713 183h2v6h-2zM355 182h13v8h-13zM281 182h68v8h-68zM536 189h10v1h-10zM374 185h3v6h-3zM383 185h2v6h-2zM213 185h2v6h-2zM205 185h2v6h-2zM705 189h10v3h-10zM612 189h11v3h-11zM688 189h11v3h-11zM281 190h11v3h-11zM357 190h11v3h-11zM374 191h11v2h-11zM496 237h10v2h-10zM534 237h11v2h-11zM204 238h10v2h-10zM165 238h10v2h-10zM534 239h3v6h-3zM496 239h2v6h-2zM543 239h2v6h-2zM504 239h2v6h-2zM173 240h2v6h-2zM204 240h2v6h-2zM165 240h2v6h-2zM212 240h2v6h-2zM514 237h10v10h-10zM496 245h10v2h-10zM534 245h11v2h-11zM183 238h10v10h-10zM204 246h10v2h-10zM165 246h10v2h-10zM480 257h11v2h-11z"/>
<path fill="#8387ab" d="M290 113h2v2h-2zM259 113h3v2h-3zM336 113h2v2h-2zM322 113h2v2h-2zM268 113h2v2h-2zM237 113h3v2h-3zM127 113h3v2h-3zM314 113h2v2h-2zM357 113h3v2h-3zM158 113h2v2h-2zM213 113h2v2h-2zM344 113h3v2h-3zM136 113h2v2h-2zM366 113h2v2h-2zM150 113h2v2h-2zM191 113h2v2h-2zM246 113h2v2h-2zM205 113h2v2h-2zM183 113h2v2h-2zM281 113h3v2h-3zM205 115h10v7h-10zM237 115h11v7h-11zM127 115h11v7h-11zM259 115h11v7h-11zM183 115h10v7h-10zM336 115h11v7h-11zM314 115h10v7h-10zM281 115h11v7h-11zM150 115h10v7h-10zM357 115h11v7h-11zM290 122h2v6h-2zM259 122h3v6h-3zM336 122h2v6h-2zM322 122h2v6h-2zM268 122h2v6h-2zM237 122h3v6h-3zM127 122h3v6h-3zM314 122h2v6h-2zM357 122h3v6h-3zM158 122h2v6h-2zM213 122h2v6h-2zM344 122h3v6h-3zM136 122h2v6h-2zM366 122h2v6h-2zM150 122h2v6h-2zM191 122h2v6h-2zM246 122h2v6h-2zM205 122h2v6h-2zM183 122h2v6h-2zM281 122h3v6h-3zM205 128h10v1h-10zM237 128h11v1h-11zM127 128h11v1h-11zM259 128h11v1h-11zM183 128h10v1h-10zM336 128h11v1h-11zM314 128h10v1h-10zM281 128h11v1h-11zM150 128h10v1h-10zM357 128h11v1h-11zM568 141h11v4h-11zM514 141h10v4h-10zM458 141h11v4h-11zM590 141h11v4h-11zM667 141h10v4h-10zM536 141h10v4h-10zM644 141h11v4h-11zM612 141h11v4h-11zM481 141h10v4h-10zM688 141h11v4h-11zM644 145h3v6h-3zM675 145h2v6h-2zM514 145h2v6h-2zM576 145h3v6h-3zM466 145h3v6h-3zM653 145h2v6h-2zM612 145h2v6h-2zM696 145h3v6h-3zM667 145h2v6h-2zM590 145h2v6h-2zM544 145h2v6h-2zM489 145h2v6h-2zM481 145h2v6h-2zM536 145h2v6h-2zM458 145h2v6h-2zM522 145h2v6h-2zM620 145h3v6h-3zM598 145h3v6h-3zM688 145h2v6h-2zM568 145h2v6h-2zM568 151h11v2h-11zM514 151h10v2h-10zM458 151h11v2h-11zM644 151h11v2h-11zM590 151h11v3h-11zM667 151h10v3h-10zM536 151h10v3h-10zM612 151h11v3h-11zM481 151h10v3h-10zM688 151h11v3h-11z"/>
<path fill="#8389a9" d="M627 54h12v2h-12zM534 54h12v2h-12zM296 55h12v2h-12zM203 55h12v2h-12zM542 56h4v6h-4zM644 56h11v6h-11zM534 56h2v6h-2zM636 56h3v6h-3zM627 56h3v6h-3zM203 57h3v6h-3zM314 57h10v6h-10zM212 57h3v6h-3zM306 57h2v6h-2zM296 57h4v6h-4zM627 62h12v2h-12zM534 62h12v2h-12zM627 64h1v1h-1zM545 64h1v1h-1zM296 63h12v3h-12zM203 63h12v3h-12zM480 71h12v2h-12zM150 72h10v1h-10zM150 73h11v2h-11zM489 73h3v6h-3zM480 73h3v6h-3zM150 75h2v6h-2zM158 75h3v6h-3zM480 79h12v3h-12zM150 81h11v2h-11zM551 87h11v3h-11zM220 88h11v3h-11zM568 90h11v6h-11zM551 90h2v6h-2zM559 90h3v6h-3zM237 91h11v6h-11zM229 91h2v6h-2zM220 91h3v6h-3zM551 96h11v2h-11zM220 97h11v2h-11zM761 142h12v3h-12zM770 145h3v6h-3zM761 145h3v6h-3zM761 151h12v2h-12zM688 161h11v5h-11zM357 162h11v5h-11zM706 164h10v3h-10zM241 166h1v1h-1zM375 166h10v2h-10zM573 166h11v3h-11zM241 167h12v3h-12zM1235 165h8v6h-8zM1318 169h12v2h-12zM1170 169h12v3h-12zM452 170h12v2h-12zM714 167h2v6h-2zM706 167h2v6h-2zM1054 172h12v1h-12zM844 172h12v1h-12zM375 168h2v6h-2zM383 168h2v6h-2zM121 171h12v3h-12zM573 169h2v6h-2zM581 169h3v6h-3zM1053 173h13v2h-13zM843 173h13v2h-13zM706 173h10v2h-10zM241 170h4v6h-4zM251 170h2v6h-2zM375 174h10v2h-10zM705 175h10v1h-10zM1318 171h4v6h-4zM1328 171h2v6h-2zM374 176h11v1h-11zM461 172h3v6h-3zM1170 172h3v6h-3zM1179 172h3v6h-3zM452 172h3v6h-3zM573 175h11v3h-11zM241 176h12v2h-12zM612 175h11v4h-11zM1318 177h12v2h-12zM242 178h11v1h-11zM121 174h3v6h-3zM130 174h3v6h-3zM281 176h11v4h-11zM1170 178h12v2h-12zM1318 179h2v1h-2zM843 175h4v6h-4zM1063 175h3v6h-3zM853 175h3v6h-3zM1053 175h4v6h-4zM452 178h12v3h-12zM612 179h74v2h-74zM121 180h12v2h-12zM281 180h74v2h-74zM1009 143h1v40h-1zM1229 173h6v10h-6zM1023 173h6v10h-6zM813 173h6v10h-6zM1053 181h13v2h-13zM843 181h13v2h-13zM536 192h10v5h-10zM205 193h10v5h-10zM374 233h11v1h-11zM705 232h10v3h-10zM375 234h9v2h-9zM550 237h12v2h-12zM475 237h12v2h-12zM219 238h12v2h-12zM144 238h12v2h-12zM705 235h2v6h-2zM713 235h2v6h-2zM780 236h11v5h-11zM990 236h11v5h-11zM375 236h2v6h-2zM383 236h1v6h-1zM705 241h10v2h-10zM375 242h9v2h-9zM568 239h11v6h-11zM550 239h3v6h-3zM559 239h3v6h-3zM475 239h2v6h-2zM483 239h4v6h-4zM237 240h11v6h-11zM144 240h3v6h-3zM219 240h3v6h-3zM228 240h3v6h-3zM153 240h3v6h-3zM550 245h12v2h-12zM475 245h12v2h-12zM219 246h12v2h-12zM144 246h12v2h-12zM144 248h11v1h-11zM220 248h11v1h-11zM497 257h10v2h-10zM166 258h10v1h-10z"/>
<path fill="#88b86f" d="M1089 61h10v16h-10zM778 61h11v16h-11zM822 61h11v16h-11zM1199 61h10v16h-10zM988 61h11v16h-11zM1330 61h10v16h-10zM1032 61h10v16h-10zM879 61h10v16h-10zM1199 105h10v4h-10zM705 198h10v2h-10zM744 200h6v11h-6zM374 198h11v16h-11zM705 211h10v3h-10zM127 259h11v1h-11zM183 259h10v1h-10zM491 259h5v8h-5zM160 260h5v9h-5zM780 259h11v12h-11zM879 259h10v12h-10zM568 259h11v13h-11zM237 259h11v13h-11zM314 259h10v13h-10zM644 259h11v13h-11zM514 266h10v6h-10zM183 267h10v5h-10zM127 269h11v3h-11zM458 269h11v3h-11z"/>
<path fill="#8cc353" d="M1040 105h2v1h-2zM1110 105h2v1h-2zM1032 105h2v1h-2zM1097 105h2v1h-2zM1009 105h3v1h-3zM988 105h2v1h-2zM1118 105h3v1h-3zM1018 105h3v1h-3zM1089 105h2v1h-2zM996 105h3v1h-3zM1089 106h10v6h-10zM1110 106h11v6h-11zM1009 106h12v6h-12zM988 106h11v6h-11zM1032 106h10v6h-10zM1199 109h10v4h-10zM1233 110h10v3h-10zM1040 112h2v6h-2zM1110 112h2v6h-2zM1032 112h2v6h-2zM1097 112h2v6h-2zM1009 112h3v6h-3zM988 112h2v6h-2zM1118 112h3v6h-3zM1018 112h3v6h-3zM1089 112h2v6h-2zM996 112h3v6h-3zM1199 113h2v6h-2zM1241 113h2v6h-2zM1207 113h2v6h-2zM1233 113h2v6h-2zM1089 118h10v2h-10zM1110 118h11v2h-11zM1009 118h12v2h-12zM988 118h11v2h-11zM1032 118h10v2h-10zM1199 119h10v1h-10zM1233 119h10v1h-10zM568 198h11v2h-11zM514 198h10v2h-10zM458 198h11v2h-11zM590 198h11v2h-11zM667 198h10v2h-10zM536 198h10v2h-10zM644 198h11v2h-11zM612 198h11v2h-11zM481 198h10v2h-10zM688 198h11v2h-11zM822 198h11v4h-11zM901 198h10v4h-10zM780 199h11v3h-11zM150 199h10v3h-10zM205 199h10v3h-10zM336 199h11v3h-11zM183 199h10v3h-10zM281 199h11v3h-11zM879 199h10v3h-10zM259 199h11v3h-11zM237 199h11v3h-11zM127 199h11v3h-11zM314 199h10v3h-10zM357 199h11v3h-11zM789 202h2v6h-2zM909 202h2v6h-2zM290 202h2v6h-2zM887 202h2v6h-2zM259 202h3v6h-3zM831 202h2v6h-2zM336 202h2v6h-2zM322 202h2v6h-2zM901 202h2v6h-2zM268 202h2v6h-2zM237 202h3v6h-3zM127 202h3v6h-3zM314 202h2v6h-2zM879 202h2v6h-2zM357 202h3v6h-3zM158 202h2v6h-2zM213 202h2v6h-2zM344 202h3v6h-3zM136 202h2v6h-2zM780 202h3v6h-3zM366 202h2v6h-2zM150 202h2v6h-2zM191 202h2v6h-2zM246 202h2v6h-2zM205 202h2v6h-2zM822 202h3v6h-3zM183 202h2v6h-2zM281 202h3v6h-3zM568 211h11v2h-11zM536 211h10v2h-10zM481 211h10v2h-10zM644 211h11v2h-11zM612 211h11v2h-11zM514 211h10v2h-10zM590 211h11v2h-11zM458 211h11v2h-11zM667 211h10v2h-10zM688 211h11v2h-11zM205 208h10v6h-10zM780 208h11v6h-11zM822 208h11v6h-11zM237 208h11v6h-11zM127 208h11v6h-11zM259 208h11v6h-11zM183 208h10v6h-10zM336 208h11v6h-11zM314 208h10v6h-10zM281 208h11v6h-11zM150 208h10v6h-10zM901 208h10v6h-10zM879 208h10v6h-10zM357 208h11v6h-11zM644 213h3v1h-3zM675 213h2v1h-2zM514 213h2v1h-2zM576 213h3v1h-3zM466 213h3v1h-3zM653 213h2v1h-2zM612 213h2v1h-2zM696 213h3v1h-3zM667 213h2v1h-2zM590 213h2v1h-2zM544 213h2v1h-2zM489 213h2v1h-2zM481 213h2v1h-2zM536 213h2v1h-2zM458 213h2v1h-2zM522 213h2v1h-2zM620 213h3v1h-3zM598 213h3v1h-3zM688 213h2v1h-2zM568 213h2v1h-2zM879 271h10v1h-10zM780 271h11v1h-11z"/>
<path fill="#8d9893" d="M257 113h2v16h-2zM292 113h1v16h-1zM182 113h1v16h-1zM138 113h2v16h-2zM278 113h3v16h-3zM215 113h1v16h-1zM160 113h1v16h-1zM146 113h4v16h-4zM324 113h3v16h-3zM333 113h3v16h-3zM355 113h2v16h-2zM313 113h1v16h-1zM368 113h1v16h-1zM193 113h3v16h-3zM202 113h3v16h-3zM347 113h2v16h-2zM126 113h1v16h-1zM248 113h3v16h-3zM236 113h1v16h-1zM270 113h2v16h-2zM469 141h2v12h-2zM513 141h1v12h-1zM655 141h3v12h-3zM643 141h1v12h-1zM579 141h3v12h-3zM524 141h3v12h-3zM567 141h1v12h-1zM457 141h1v12h-1zM623 141h1v13h-1zM601 141h2v13h-2zM588 141h2v13h-2zM477 141h4v13h-4zM546 141h1v13h-1zM491 141h1v13h-1zM677 141h3v13h-3zM664 141h3v13h-3zM609 141h3v13h-3zM686 141h2v13h-2zM699 141h1v13h-1zM533 141h3v13h-3zM513 153h14v1h-14zM567 153h15v1h-15zM643 153h15v1h-15zM457 153h14v1h-14z"/>
<path fill="#8fcb36" d="M1230 109h14v1h-14zM1007 105h2v6h-2zM1029 105h3v6h-3zM1030 111h2v1h-2zM1008 111h1v1h-1zM1108 105h2v15h-2zM1021 105h2v15h-2zM1121 105h1v15h-1zM1088 105h1v15h-1zM1099 105h3v15h-3zM1042 105h1v15h-1zM999 105h2v15h-2zM987 105h1v15h-1zM1209 109h3v11h-3zM1197 109h2v11h-2zM1218 109h6v11h-6zM1243 110h1v10h-1zM1230 110h3v10h-3zM1007 112h2v8h-2zM1029 112h3v8h-3zM202 198h14v1h-14zM333 198h16v1h-16zM236 198h15v1h-15zM278 198h15v1h-15zM313 198h14v1h-14zM878 198h14v1h-14zM126 198h14v1h-14zM779 198h15v1h-15zM355 198h14v1h-14zM257 198h15v1h-15zM146 198h15v1h-15zM182 198h14v1h-14zM623 198h1v2h-1zM601 198h2v2h-2zM588 198h2v2h-2zM477 198h4v2h-4zM469 198h2v2h-2zM513 198h1v2h-1zM546 198h1v2h-1zM491 198h1v2h-1zM677 198h3v2h-3zM655 198h3v2h-3zM664 198h3v2h-3zM609 198h3v2h-3zM643 198h1v2h-1zM686 198h2v2h-2zM699 198h1v2h-1zM579 198h3v2h-3zM524 198h3v2h-3zM533 198h3v2h-3zM567 198h1v2h-1zM457 198h1v2h-1zM477 211h4v1h-4zM664 211h3v1h-3zM609 211h3v1h-3zM686 211h2v1h-2zM533 211h3v1h-3zM819 198h3v15h-3zM898 198h3v15h-3zM800 198h13v15h-13zM257 199h2v14h-2zM278 199h3v14h-3zM146 199h4v14h-4zM333 199h3v14h-3zM355 199h2v14h-2zM202 199h3v14h-3zM687 212h1v1h-1zM610 212h2v1h-2zM534 212h2v1h-2zM478 212h3v1h-3zM665 212h2v1h-2zM911 198h1v16h-1zM833 198h1v16h-1zM292 199h1v15h-1zM791 199h3v15h-3zM182 199h1v15h-1zM779 199h1v15h-1zM138 199h2v15h-2zM215 199h1v15h-1zM160 199h1v15h-1zM324 199h3v15h-3zM889 199h3v15h-3zM313 199h1v15h-1zM368 199h1v15h-1zM193 199h3v15h-3zM878 199h1v15h-1zM347 199h2v15h-2zM126 199h1v15h-1zM248 199h3v15h-3zM236 199h1v15h-1zM270 199h2v15h-2zM623 211h1v3h-1zM601 211h2v3h-2zM588 211h2v3h-2zM469 211h2v3h-2zM513 211h1v3h-1zM546 211h1v3h-1zM491 211h1v3h-1zM677 211h3v3h-3zM655 211h3v3h-3zM643 211h1v3h-1zM699 211h1v3h-1zM579 211h3v3h-3zM524 211h3v3h-3zM567 211h1v3h-1zM457 211h1v3h-1zM477 213h4v1h-4zM801 213h12v1h-12zM821 213h1v1h-1zM203 213h2v1h-2zM664 213h3v1h-3zM609 213h3v1h-3zM900 213h1v1h-1zM686 213h2v1h-2zM258 213h1v1h-1zM147 213h3v1h-3zM356 213h1v1h-1zM334 213h2v1h-2zM533 213h3v1h-3zM279 213h2v1h-2zM889 271h33v1h-33zM776 271h4v1h-4zM791 271h88v1h-88z"/>
<path fill="#9468b3" d="M972 142h10v3h-10zM972 145h2v6h-2zM980 145h2v6h-2zM972 151h10v2h-10zM1271 163h11v2h-11zM590 169h2v1h-2zM598 169h3v1h-3zM1280 165h2v6h-2zM1271 165h3v6h-3zM268 170h2v2h-2zM259 170h3v2h-3zM590 170h11v3h-11zM1271 171h11v3h-11zM259 172h11v2h-11zM680 181h6v8h-6zM349 182h6v8h-6zM536 190h10v2h-10zM205 191h10v2h-10zM968 200h3v2h-3zM969 202h2v6h-2zM968 208h3v3h-3z"/>
<path fill="#94a977" d="M1102 96h6v9h-6zM1001 96h6v9h-6zM1023 96h6v9h-6zM791 96h6v15h-6zM813 96h6v15h-6zM791 111h2v1h-2zM813 111h2v1h-2zM140 106h6v7h-6zM349 106h6v7h-6zM196 106h6v7h-6zM251 106h6v7h-6zM272 106h6v7h-6zM327 106h6v7h-6zM791 112h6v9h-6zM813 112h6v9h-6zM1001 120h6v1h-6zM1023 120h6v1h-6zM892 96h6v27h-6zM1102 120h6v3h-6zM1102 123h1v1h-1zM892 123h1v1h-1zM582 105h6v27h-6zM603 105h6v27h-6zM658 105h6v27h-6zM471 105h6v27h-6zM680 105h6v27h-6zM527 105h6v27h-6zM140 129h6v4h-6zM349 129h6v4h-6zM196 129h6v4h-6zM251 129h6v4h-6zM272 129h6v4h-6zM327 129h6v4h-6zM471 132h1v1h-1zM603 132h1v1h-1zM658 132h1v1h-1zM527 132h1v1h-1zM680 132h1v1h-1zM582 132h1v1h-1zM272 133h1v1h-1zM327 133h1v1h-1zM140 133h1v1h-1zM349 133h1v1h-1zM196 133h1v1h-1zM251 133h1v1h-1zM1224 120h6v17h-6zM1212 120h6v17h-6zM1343 111h6v27h-6zM1224 137h1v1h-1zM471 133h6v8h-6zM582 133h6v8h-6zM603 133h6v8h-6zM658 133h6v8h-6zM680 133h6v8h-6zM527 133h6v8h-6zM1102 124h6v22h-6zM892 124h6v22h-6zM140 134h6v21h-6zM349 134h6v21h-6zM196 134h6v21h-6zM251 134h6v21h-6zM272 134h6v21h-6zM327 134h6v21h-6zM1224 138h6v21h-6zM1212 138h6v21h-6zM1343 139h6v21h-6zM582 197h6v1h-6zM603 197h6v1h-6zM658 197h6v1h-6zM471 197h6v1h-6zM680 197h6v1h-6zM527 197h6v1h-6zM1229 188h6v16h-6zM1207 188h6v16h-6zM1343 188h6v16h-6zM1207 204h1v1h-1zM1003 198h7v15h-7zM1102 198h6v15h-6zM1023 198h6v15h-6zM1229 205h6v9h-6zM1207 205h6v9h-6zM1343 205h6v9h-6zM1102 213h1v1h-1zM1023 213h1v1h-1zM1003 213h2v1h-2zM582 214h6v8h-6zM603 214h6v8h-6zM658 214h6v8h-6zM471 214h6v8h-6zM680 214h6v8h-6zM527 214h6v8h-6zM140 214h6v9h-6zM349 214h6v9h-6zM196 214h6v9h-6zM251 214h6v9h-6zM794 214h6v9h-6zM813 214h6v9h-6zM1003 214h7v9h-7zM1102 214h6v9h-6zM272 214h6v9h-6zM892 214h6v9h-6zM327 214h6v9h-6zM1023 214h6v9h-6z"/>
<path fill="#9f7a9c" d="M140 113h6v16h-6zM349 113h6v16h-6zM196 113h6v16h-6zM251 113h6v16h-6zM272 113h6v16h-6zM327 113h6v16h-6zM582 141h6v13h-6zM603 141h6v13h-6zM658 141h6v13h-6zM471 141h6v13h-6zM680 141h6v13h-6zM527 141h6v13h-6z"/>
<path fill="#a2a170" d="M1396 168h11v3h-11zM1405 171h2v2h-2zM1396 171h3v2h-3zM1396 173h1v1h-1zM1405 174h2v3h-2zM1396 174h3v3h-3zM1394 170h1v8h-1zM1396 177h11v3h-11zM733 200h11v2h-11zM742 202h2v6h-2zM733 202h3v6h-3zM705 200h10v11h-10zM733 208h11v3h-11zM480 259h11v1h-11zM149 260h11v1h-11zM489 260h2v6h-2zM480 260h3v6h-3zM158 261h2v6h-2zM149 261h3v6h-3zM480 266h11v2h-11zM458 259h11v10h-11zM127 260h11v9h-11zM149 267h11v2h-11zM77 282h16v2h-16zM77 284h5v6h-5zM88 284h5v6h-5zM77 290h16v2h-16z"/>
<path fill="#a4a861" d="M750 200h12v3h-12zM750 203h4v6h-4zM760 203h2v6h-2zM750 209h12v2h-12zM166 259h10v1h-10zM505 259h2v6h-2zM496 259h3v6h-3zM514 259h10v7h-10zM165 260h3v6h-3zM174 260h2v6h-2zM183 260h10v7h-10zM496 265h11v2h-11zM165 266h11v3h-11z"/>
<path fill="#a4a862" d="M568 200h11v1h-11zM514 200h10v1h-10zM458 200h11v1h-11zM590 200h11v1h-11zM667 200h10v1h-10zM536 200h10v1h-10zM644 200h11v1h-11zM612 200h11v1h-11zM481 200h10v1h-10zM688 200h11v1h-11zM644 201h3v6h-3zM675 201h2v6h-2zM514 201h2v6h-2zM576 201h3v6h-3zM466 201h3v6h-3zM653 201h2v6h-2zM612 201h2v6h-2zM696 201h3v6h-3zM667 201h2v6h-2zM590 201h2v6h-2zM544 201h2v6h-2zM489 201h2v6h-2zM481 201h2v6h-2zM536 201h2v6h-2zM458 201h2v6h-2zM522 201h2v6h-2zM620 201h3v6h-3zM598 201h3v6h-3zM688 201h2v6h-2zM568 201h2v6h-2zM568 207h11v4h-11zM514 207h10v4h-10zM458 207h11v4h-11zM590 207h11v4h-11zM667 207h10v4h-10zM536 207h10v4h-10zM644 207h11v4h-11zM612 207h11v4h-11zM481 207h10v4h-10zM688 207h11v4h-11z"/>
<path fill="#a6ad54" d="M623 200h1v11h-1zM601 200h2v11h-2zM588 200h2v11h-2zM477 200h4v11h-4zM469 200h2v11h-2zM513 200h1v11h-1zM546 200h1v11h-1zM491 200h1v11h-1zM677 200h3v11h-3zM664 200h3v11h-3zM655 200h3v11h-3zM609 200h3v11h-3zM643 200h1v11h-1zM686 200h2v11h-2zM699 200h1v11h-1zM579 200h3v11h-3zM524 200h3v11h-3zM533 200h3v11h-3zM567 200h1v11h-1zM457 200h1v11h-1z"/>
<path fill="#a7b344" d="M1001 105h6v6h-6zM1023 105h6v6h-6zM1001 111h1v1h-1zM1023 111h1v1h-1zM1102 105h6v15h-6zM1224 109h6v11h-6zM1212 109h6v11h-6zM1001 112h6v8h-6zM1023 112h6v8h-6zM582 198h6v2h-6zM603 198h6v2h-6zM658 198h6v2h-6zM471 198h6v2h-6zM680 198h6v2h-6zM527 198h6v2h-6zM582 211h6v1h-6zM603 211h6v1h-6zM658 211h6v1h-6zM471 211h6v1h-6zM680 211h6v1h-6zM527 211h6v1h-6zM140 198h6v15h-6zM349 198h6v15h-6zM196 198h6v15h-6zM251 198h6v15h-6zM794 198h6v15h-6zM813 198h6v15h-6zM272 198h6v15h-6zM892 198h6v15h-6zM327 198h6v15h-6zM892 213h2v1h-2zM272 213h1v1h-1zM471 213h6v1h-6zM582 213h6v1h-6zM603 213h6v1h-6zM658 213h6v1h-6zM349 213h1v1h-1zM813 213h2v1h-2zM196 213h1v1h-1zM680 213h6v1h-6zM527 213h6v1h-6zM794 213h1v1h-1zM251 213h1v1h-1z"/>
<path fill="#ae5aa2" d="M537 71h6v11h-6zM206 73h6v10h-6zM971 142h1v11h-1zM1271 162h11v1h-11zM603 162h6v7h-6zM272 163h6v7h-6zM601 169h8v4h-8zM270 170h8v4h-8zM527 164h6v11h-6zM196 165h6v11h-6zM680 189h6v3h-6zM546 190h42v2h-42zM658 191h6v1h-6zM603 191h6v1h-6zM349 190h6v3h-6zM215 191h42v2h-42zM527 237h6v10h-6zM196 238h6v10h-6z"/>
<path fill="#af9967" d="M961 200h7v2h-7zM961 202h2v6h-2zM961 208h7v3h-7z"/>
<path fill="#b19f59" d="M582 200h6v11h-6zM603 200h6v11h-6zM658 200h6v11h-6zM471 200h6v11h-6zM680 200h6v11h-6zM527 200h6v11h-6z"/>
<path fill="#b4b4b4" d="M68 39h6v6h-6zM86 40h6v6h-6zM613 56h6v6h-6zM553 56h6v6h-6zM223 58h6v6h-6zM282 58h6v6h-6zM724 66h6v6h-6zM499 74h6v6h-6zM553 74h6v6h-6zM223 75h6v6h-6zM168 75h6v6h-6zM724 90h6v6h-6zM422 92h6v6h-6zM932 110h6v6h-6zM1274 110h6v6h-6zM71 118h6v6h-6zM959 145h6v6h-6zM745 145h6v6h-6zM339 166h5v2h-5zM669 164h6v6h-6zM592 164h6v6h-6zM483 166h6v6h-6zM558 166h6v6h-6zM262 166h6v6h-6zM338 168h6v4h-6zM1399 171h6v2h-6zM152 168h6v6h-6zM228 168h6v6h-6zM932 168h6v6h-6zM1399 174h6v3h-6zM438 172h6v6h-6zM91 174h6v6h-6zM108 174h6v6h-6zM538 183h6v6h-6zM707 183h6v6h-6zM377 185h6v6h-6zM207 185h6v6h-6zM736 202h6v6h-6zM935 203h6v6h-6zM537 239h6v6h-6zM498 239h6v6h-6zM167 240h6v6h-6zM206 240h6v6h-6zM483 260h6v6h-6zM152 261h6v6h-6zM92 262h6v6h-6zM82 284h6v6h-6z"/>
<path fill="#b9886c" d="M63 34h15v5h-15zM63 39h5v6h-5zM74 39h4v6h-4zM63 45h15v5h-15zM719 61h15v5h-15zM730 66h4v6h-4zM719 66h5v6h-5zM719 72h15v5h-15zM1269 105h15v5h-15zM927 105h16v5h-16zM927 110h5v6h-5zM1280 110h4v6h-4zM1269 110h5v6h-5zM938 110h5v6h-5zM66 113h16v5h-16zM1269 116h15v4h-15zM927 116h16v4h-16zM77 118h5v6h-5zM66 118h5v6h-5zM66 124h16v5h-16zM954 140h15v5h-15zM965 145h4v6h-4zM954 145h5v6h-5zM954 151h15v4h-15zM1394 166h15v2h-15zM1394 168h2v2h-2zM86 169h15v5h-15zM1395 170h1v8h-1zM1407 168h2v12h-2zM97 174h4v6h-4zM86 174h5v6h-5zM1394 178h2v2h-2zM1394 180h15v2h-15zM86 180h15v4h-15zM930 198h15v5h-15zM930 203h5v6h-5zM941 203h4v6h-4zM700 200h5v11h-5zM418 200h39v11h-39zM715 200h18v11h-18zM624 200h19v11h-19zM492 200h21v11h-21zM955 200h5v11h-5zM547 200h20v11h-20zM392 198h16v16h-16zM930 209h15v5h-15zM418 211h11v3h-11zM87 257h16v3h-16zM87 260h40v2h-40zM469 259h11v9h-11zM98 262h29v6h-29zM87 262h5v6h-5zM418 259h40v10h-40zM138 260h11v9h-11zM469 268h12v1h-12zM87 268h40v1h-40zM87 269h16v4h-16zM77 279h16v3h-16zM77 292h16v3h-16z"/>
<path fill="#bc984f" d="M1224 105h6v4h-6zM1212 105h6v4h-6zM960 199h8v1h-8zM750 199h13v1h-13zM762 200h1v11h-1zM960 200h1v11h-1zM960 211h8v1h-8zM750 211h13v1h-13zM754 212h6v2h-6zM963 212h5v29h-5zM196 259h6v1h-6zM176 259h1v1h-1zM165 259h1v1h-1zM507 259h7v7h-7zM524 259h9v7h-9zM176 260h7v7h-7zM193 260h9v7h-9zM507 266h1v1h-1zM496 267h12v1h-12zM176 267h1v2h-1zM165 269h12v1h-12z"/>
<path fill="#e05fff" d="M78 36h4v13h-4zM579 54h32v11h-32zM562 54h6v11h-6zM248 55h32v11h-32zM231 55h6v11h-6zM524 71h13v11h-13zM543 71h8v11h-8zM507 71h7v11h-7zM212 73h8v10h-8zM176 73h7v10h-7zM193 73h13v10h-13zM721 77h11v11h-11zM216 113h20v16h-20zM82 113h44v16h-44zM293 113h20v16h-20zM369 113h39v16h-39zM161 113h21v16h-21zM419 100h11v41h-11zM700 141h44v1h-44zM969 142h2v11h-2zM700 142h43v11h-43zM418 141h39v13h-39zM624 141h19v13h-19zM492 141h21v13h-21zM547 141h20v13h-20zM700 153h44v1h-44zM1271 120h11v42h-11zM927 120h16v46h-16zM601 162h2v7h-2zM419 154h11v16h-11zM270 163h2v7h-2zM623 162h44v11h-44zM609 162h3v11h-3zM278 163h3v11h-3zM292 163h44v11h-44zM546 164h10v11h-10zM491 164h36v11h-36zM533 164h3v11h-3zM215 165h10v11h-10zM160 165h36v11h-36zM202 165h3v11h-3zM419 170h17v11h-17zM101 171h4v11h-4zM546 181h66v9h-66zM215 182h66v9h-66zM623 189h57v2h-57zM588 190h24v1h-24zM699 181h6v11h-6zM686 189h2v3h-2zM588 191h15v1h-15zM609 191h3v1h-3zM664 191h16v1h-16zM623 191h35v1h-35zM368 182h6v11h-6zM355 190h2v3h-2zM292 190h57v3h-57zM257 191h24v2h-24zM392 129h16v69h-16zM945 200h10v11h-10zM418 214h11v8h-11zM392 214h16v8h-16zM392 222h39v16h-39zM533 237h1v10h-1zM524 237h3v10h-3zM506 237h8v10h-8zM202 238h2v10h-2zM175 238h8v10h-8zM193 238h3v10h-3zM418 238h11v21h-11z"/>
<path fill="#f7fb14" d="M46 36h17v6h-17zM58 42h5v1h-5zM46 42h4v1h-4zM46 43h17v6h-17zM1340 61h68v6h-68zM1403 67h5v1h-5zM1340 67h59v1h-59zM734 61h44v16h-44zM999 61h33v16h-33zM789 61h33v16h-33zM1099 61h100v16h-100zM1042 61h47v16h-47zM1209 61h121v16h-121zM833 61h46v16h-46zM889 61h99v16h-99zM1340 68h68v9h-68zM1122 105h77v4h-77zM1209 105h3v4h-3zM1218 105h6v4h-6zM1230 105h39v4h-39zM46 114h20v5h-20zM943 105h44v15h-44zM1043 105h45v15h-45zM1244 109h25v11h-25zM1122 109h75v11h-75zM46 119h3v1h-3zM56 119h10v1h-10zM46 120h20v7h-20zM45 170h41v5h-41zM54 175h32v1h-32zM45 175h5v1h-5zM45 176h41v7h-41zM87 184h13v14h-13zM955 155h13v44h-13zM715 198h64v1h-64zM700 198h5v2h-5zM408 198h49v2h-49zM624 198h19v2h-19zM492 198h21v2h-21zM547 198h20v2h-20zM715 199h35v1h-35zM955 199h5v1h-5zM763 199h16v13h-16zM715 211h35v1h-35zM955 211h5v1h-5zM912 198h18v16h-18zM369 198h5v16h-5zM216 198h20v16h-20zM293 198h20v16h-20zM834 198h44v16h-44zM385 198h7v16h-7zM86 198h40v16h-40zM161 198h21v16h-21zM408 200h10v14h-10zM700 211h5v3h-5zM429 211h28v3h-28zM624 211h19v3h-19zM492 211h21v3h-21zM547 211h20v3h-20zM715 212h39v2h-39zM760 212h19v2h-19zM955 212h8v29h-8zM955 241h13v18h-13zM138 259h27v1h-27zM103 259h24v1h-24zM177 259h6v1h-6zM193 259h3v1h-3zM45 259h42v5h-42zM54 264h33v1h-33zM45 264h5v1h-5zM533 259h35v7h-35zM202 259h35v8h-35zM508 266h6v2h-6zM491 267h5v1h-5zM324 259h94v10h-94zM481 268h33v1h-33zM177 267h6v3h-6zM138 269h27v1h-27zM889 259h79v12h-79zM655 259h125v12h-125zM791 259h88v12h-88zM579 259h65v13h-65zM248 259h66v13h-66zM45 265h42v7h-42zM524 266h44v6h-44zM193 267h44v5h-44zM103 269h24v3h-24zM469 269h45v3h-45zM324 269h134v3h-134zM138 270h45v2h-45zM655 271h121v1h-121zM922 271h46v1h-46zM45 280h32v6h-32zM45 286h5v1h-5zM58 286h19v1h-19zM45 287h32v6h-32z"/>
<path fill="#ff9bc0" d="M533 53h13v1h-13zM627 53h13v1h-13zM202 54h13v1h-13zM296 54h13v1h-13zM639 54h1v2h-1zM308 55h1v2h-1zM639 56h5v6h-5zM655 56h9v6h-9zM308 57h6v6h-6zM324 57h9v6h-9zM533 54h1v10h-1zM639 62h1v2h-1zM628 64h12v1h-12zM533 64h12v1h-12zM202 55h1v11h-1zM308 63h1v3h-1zM296 66h13v1h-13zM202 66h13v1h-13zM537 65h6v6h-6zM479 70h13v1h-13zM149 71h12v1h-12zM206 67h6v6h-6zM160 72h1v1h-1zM479 71h1v11h-1zM149 72h1v11h-1zM479 82h13v1h-13zM149 83h12v1h-12zM562 87h1v3h-1zM231 88h1v3h-1zM579 90h9v6h-9zM562 90h6v6h-6zM892 91h6v5h-6zM791 91h6v5h-6zM813 91h6v5h-6zM1102 91h6v5h-6zM1001 91h6v5h-6zM1023 91h6v5h-6zM248 91h9v6h-9zM231 91h6v6h-6zM537 82h6v16h-6zM482 83h6v15h-6zM550 87h1v11h-1zM562 96h1v2h-1zM206 83h6v16h-6zM151 84h6v15h-6zM219 88h1v11h-1zM231 97h1v2h-1zM550 98h13v1h-13zM219 99h13v1h-13zM471 98h17v5h-17zM527 98h16v5h-16zM658 62h6v43h-6zM582 96h6v9h-6zM196 99h16v6h-16zM140 99h17v6h-17zM603 100h6v5h-6zM680 100h6v5h-6zM471 103h6v2h-6zM527 103h6v2h-6zM327 63h6v43h-6zM251 97h6v9h-6zM349 101h6v5h-6zM272 101h6v5h-6zM140 105h6v1h-6zM196 105h6v1h-6zM1343 106h6v5h-6zM971 141h12v1h-12zM761 141h13v1h-13zM1001 121h6v22h-6zM791 121h6v22h-6zM982 142h1v1h-1zM773 142h1v1h-1zM982 143h27v6h-27zM773 143h27v6h-27zM982 149h1v4h-1zM773 149h1v4h-1zM971 153h12v1h-12zM761 153h13v1h-13zM582 154h6v5h-6zM658 154h6v5h-6zM251 155h6v5h-6zM327 155h6v5h-6zM680 154h6v7h-6zM603 154h6v8h-6zM349 155h6v7h-6zM272 155h6v8h-6zM699 161h15v2h-15zM527 154h6v10h-6zM699 163h18v1h-18zM196 155h6v10h-6zM368 162h15v3h-15zM1270 162h1v3h-1zM1207 159h11v7h-11zM1224 159h11v7h-11zM680 161h8v5h-8zM699 164h7v2h-7zM368 165h18v1h-18zM572 165h13v1h-13zM349 162h8v5h-8zM242 166h12v1h-12zM368 166h7v1h-7zM584 166h1v3h-1zM1170 168h13v1h-13zM1318 168h13v1h-13zM253 167h1v3h-1zM452 169h13v1h-13zM1343 160h6v11h-6zM1243 165h28v6h-28zM1207 166h6v5h-6zM1182 169h1v2h-1zM1330 169h1v2h-1zM121 170h13v1h-13zM1053 171h14v1h-14zM843 171h14v1h-14zM1023 121h6v52h-6zM813 121h6v52h-6zM471 154h6v19h-6zM1229 166h6v7h-6zM584 169h6v4h-6zM464 170h1v3h-1zM1053 172h1v1h-1zM843 172h1v1h-1zM140 155h6v19h-6zM1282 162h1v12h-1zM253 170h6v4h-6zM1270 171h1v3h-1zM133 171h1v3h-1zM1102 146h6v29h-6zM892 146h6v29h-6zM716 164h1v11h-1zM705 166h1v9h-1zM1066 172h1v3h-1zM856 172h1v3h-1zM584 173h28v2h-28zM1270 174h13v1h-13zM374 167h1v9h-1zM253 174h28v2h-28zM715 175h2v1h-2zM385 166h1v11h-1zM1182 171h31v6h-31zM1330 171h19v6h-19zM572 166h1v12h-1zM584 175h1v3h-1zM464 173h13v6h-13zM623 175h63v4h-63zM253 176h1v3h-1zM1330 177h1v2h-1zM572 178h13v1h-13zM241 178h1v1h-1zM133 174h13v6h-13zM292 176h63v4h-63zM1182 177h1v3h-1zM1320 179h11v1h-11zM241 179h13v1h-13zM1066 175h42v6h-42zM856 175h42v6h-42zM603 175h9v6h-9zM464 179h1v2h-1zM1170 180h13v1h-13zM272 176h9v6h-9zM133 180h1v2h-1zM452 181h13v1h-13zM1004 149h5v34h-5zM1066 181h1v2h-1zM856 181h1v2h-1zM121 182h13v1h-13zM1053 183h14v1h-14zM843 183h14v1h-14zM1343 177h6v11h-6zM1207 177h6v11h-6zM1229 183h6v5h-6zM527 175h6v15h-6zM196 176h6v15h-6zM471 179h6v18h-6zM527 190h9v7h-9zM603 192h6v5h-6zM658 192h6v5h-6zM546 192h42v5h-42zM680 192h6v5h-6zM794 149h6v49h-6zM140 180h6v18h-6zM892 181h6v17h-6zM1102 181h6v17h-6zM1004 183h6v15h-6zM813 183h6v15h-6zM1023 183h6v15h-6zM196 191h9v7h-9zM349 193h6v5h-6zM215 193h42v5h-42zM272 193h6v5h-6zM327 193h6v5h-6zM968 199h4v1h-4zM971 200h1v11h-1zM968 211h4v1h-4zM1229 214h6v4h-6zM1207 214h6v4h-6zM1343 214h6v4h-6zM471 222h6v1h-6zM140 223h6v2h-6zM582 222h6v5h-6zM680 222h6v5h-6zM892 223h6v5h-6zM251 223h6v5h-6zM349 223h6v5h-6zM794 223h6v5h-6zM1003 223h7v5h-7zM1102 223h6v5h-6zM471 223h12v6h-12zM140 225h12v5h-12zM968 212h1v24h-1zM754 214h6v22h-6zM658 222h6v14h-6zM1023 223h6v13h-6zM813 223h6v13h-6zM477 229h6v7h-6zM704 232h1v4h-1zM527 222h6v15h-6zM327 223h6v14h-6zM146 230h6v7h-6zM374 234h1v3h-1zM550 236h13v1h-13zM474 236h13v1h-13zM196 223h6v15h-6zM143 237h13v1h-13zM219 237h13v1h-13zM603 222h6v17h-6zM562 237h1v2h-1zM272 223h6v17h-6zM231 238h1v2h-1zM968 236h22v5h-22zM1001 236h28v5h-28zM754 236h26v5h-26zM791 236h28v5h-28zM658 236h47v6h-47zM715 232h1v11h-1zM327 237h48v6h-48zM704 242h1v1h-1zM384 234h1v10h-1zM374 243h1v1h-1zM704 243h12v1h-12zM579 239h30v6h-30zM562 239h6v6h-6zM374 244h11v1h-11zM248 240h30v6h-30zM231 240h6v6h-6zM474 237h1v10h-1zM562 245h1v2h-1zM550 247h13v1h-13zM474 247h13v1h-13zM143 238h1v11h-1zM231 246h1v3h-1zM219 248h1v1h-1zM155 248h1v1h-1zM143 249h13v1h-13zM219 249h13v1h-13zM496 256h12v1h-12zM165 257h12v1h-12zM527 247h6v12h-6zM196 248h6v11h-6zM507 257h1v2h-1zM496 257h1v2h-1zM176 258h1v1h-1zM165 258h1v1h-1z"/>
<path fill="url(#dB)" d="M436 16h284v39h-284zM105 17h284v39h-284zM1314 21h62v37h-62zM1190 21h63v37h-63zM974 21h161v39h-161zM764 21h162v39h-162zM762 83h86v53h-86zM971 83h86v53h-86zM864 83h64v77h-64zM1073 83h64v77h-64zM1186 96h73v70h-73zM442 55h274v114h-274zM1314 97h62v73h-62zM111 56h274v115h-274z"/>
<path fill="url(#hB)" d="M1178 174h87v54h-87zM1314 174h64v54h-64zM864 183h64v55h-64zM764 183h84v55h-84zM974 183h84v55h-84zM1074 183h64v55h-64zM442 182h274v84h-274zM111 183h274v84h-274zM1314 263h65v40h-65zM978 263h161v40h-161zM1189 263h65v40h-65zM768 263h161v40h-161zM437 266h283v40h-283zM106 267h283v40h-283z"/>
<path fill="url(#dY)" d="M440 19h280v35h-280zM109 20h281v35h-281zM1318 23h58v33h-58zM1194 23h59v33h-59zM976 23h158v35h-158zM767 23h158v35h-158z"/>
<path fill="url(#hY)" d="M981 266h155v35h-155zM1192 266h59v35h-59zM771 266h155v35h-155zM1317 266h59v35h-59zM440 268h277v36h-277zM109 269h277v36h-277z"/>
<path fill="#000" d="M50 42h8v1h-8zM1399 67h4v1h-4zM793 111h6v1h-6zM1002 111h6v1h-6zM1024 111h6v1h-6zM815 111h6v1h-6zM49 119h7v1h-7zM1103 123h6v1h-6zM893 123h6v1h-6zM583 132h6v1h-6zM528 132h6v1h-6zM659 132h6v1h-6zM604 132h6v1h-6zM472 132h6v1h-6zM681 132h6v1h-6zM252 133h6v1h-6zM350 133h6v1h-6zM197 133h6v1h-6zM141 133h6v1h-6zM273 133h6v1h-6zM328 133h6v1h-6zM1212 137h6v1h-6zM1225 137h6v1h-6zM1343 138h6v1h-6zM338 157h1v5h-1zM333 162h11v1h-11zM338 163h1v5h-1zM1397 173h10v1h-10zM50 175h4v1h-4zM1229 204h6v1h-6zM1343 204h6v1h-6zM1208 204h6v1h-6zM603 212h7v1h-7zM658 212h7v1h-7zM582 212h6v1h-6zM471 212h7v1h-7zM680 212h7v1h-7zM527 212h7v1h-7zM795 213h6v1h-6zM1024 213h6v1h-6zM894 213h6v1h-6zM252 213h6v1h-6zM350 213h6v1h-6zM197 213h6v1h-6zM140 213h7v1h-7zM327 213h7v1h-7zM273 213h6v1h-6zM1103 213h6v1h-6zM1005 213h6v1h-6zM815 213h6v1h-6zM50 264h4v1h-4zM50 286h8v1h-8z"/>
</svg>
</div>
<div id="side1"></div><div id="side1b"></div><div id="side2"></div><div id="side3"></div>
<div id="win"><div id="tb"></div></div>
<div style="position:absolute;left:19px;top:342px;width:1px;height:330px;background:#6b7684"></div>
<svg id="ico" width="17" height="17" viewBox="0 0 17 17"><circle cx="8.5" cy="8.5" r="7" fill="#7b7b7b" stroke="#1a1a1a" stroke-width="1.2"/><rect x="4.6" y="5" width="2.6" height="3.4" fill="#f00"/><rect x="9.8" y="5" width="2.6" height="3.4" fill="#f00"/><path d="M8.5 9.8l2 3h-4z" fill="#f00"/></svg>
<div id="ttl">Electric Messages</div>
<div id="cont"></div>
<svg id="hl" width="1411" height="670" viewBox="0 0 1411 670">
<g fill="#ffe100">
<path d="M36.5 396.5 C70 394.5 120 395.6 170 395 C210 394.6 240 395.6 260 395.8 L260.6 409.5 C230 410.4 200 409 150 409.6 C110 410 70 408.8 37 409.6 Z"/>
<path d="M40 432.6 C90 431.4 150 432.6 200 431.8 C225 431.5 245 432.2 260 432 L260.4 445.6 C220 446.4 180 445 130 445.6 C95 446 65 445.2 40 446 Z"/>
<path d="M40 466.8 C80 465.8 140 467 190 466 C220 465.6 245 466.4 260 466 L260.6 481 C225 482 175 480.6 120 481.4 C90 481.8 60 480.8 40 481.4 Z"/>
<path d="M40 497.6 C80 496.6 130 498 180 497 C215 496.4 240 495 261 495.6 L261.5 511 C230 512.4 180 511 130 511.8 C95 512.2 65 511.2 40 511.8 Z"/>
<path d="M37 533 C80 531.8 140 533 190 532.2 C225 531.8 250 532.6 262.5 532.2 L263.5 546.6 C225 548.2 170 546.8 120 547.8 C85 548.2 60 547.4 37 548 Z"/>
<path d="M36.5 396.5 L42.6 396.5 C42.2 430 42.8 470 43.4 500 C43.8 520 43 535 42.5 548 L37 548 C37.6 530 38.4 515 38 495 C37.4 460 36.4 430 36.5 396.5 Z"/>
<path d="M254.8 396 L260.4 396 C260.2 430 260.6 470 261 497 C261.8 515 263 530 263.5 546.6 L257.5 546.8 C257.4 530 256.4 515 255.6 497 C255 470 254.6 430 254.8 396 Z"/>
<path d="M27 652 C80 651.4 140 653 190 652.6 C210 652.6 225 653.6 234 654 L234.4 666 C200 666.6 150 664.6 100 664.6 C70 664.4 45 664 27 663.8 Z"/>
</g>
</svg>
<pre id="txt">=================================2327=================================
Hierarchical NCC every cell in the design: cell 'Full_Adder{sch}'  cell 'Full_Adder{lay}'
Comparing: ENGR338:Gate_AND{sch} with: ENGR338:Gate_AND{lay}
  exports match, topologies match, sizes not checked in 0.0 seconds.
Comparing: ENGR338:Gate_INVERTER{sch} with: ENGR338:Gate_INVERTER{lay}
  exports match, topologies match, sizes not checked in 0.0 seconds.
Comparing: ENGR338:Gate_NOR{sch} with: ENGR338:Gate_NOR{lay}
  exports match, topologies match, sizes not checked in 0.0 seconds.
Comparing: ENGR338:Gate_XOR{sch} with: ENGR338:Gate_XOR{lay}
  exports match, topologies match, sizes not checked in 0.014 seconds.
Comparing: ENGR338:Full_Adder{sch} with: ENGR338:Full_Adder{lay}
  exports match, topologies match, sizes not checked in 0.0 seconds.
Summary for all cells: exports match, topologies match, sizes not checked
NCC command completed in: 0.014 seconds.
=================================2328=================================
Running DRC with area bit off, extension bit on, Mosis bit
Checking again hierarchy .... (0.0 secs)
Found 12 networks
0 errors and 0 warnings found (took 0.0 secs)</pre>
</body></html>
